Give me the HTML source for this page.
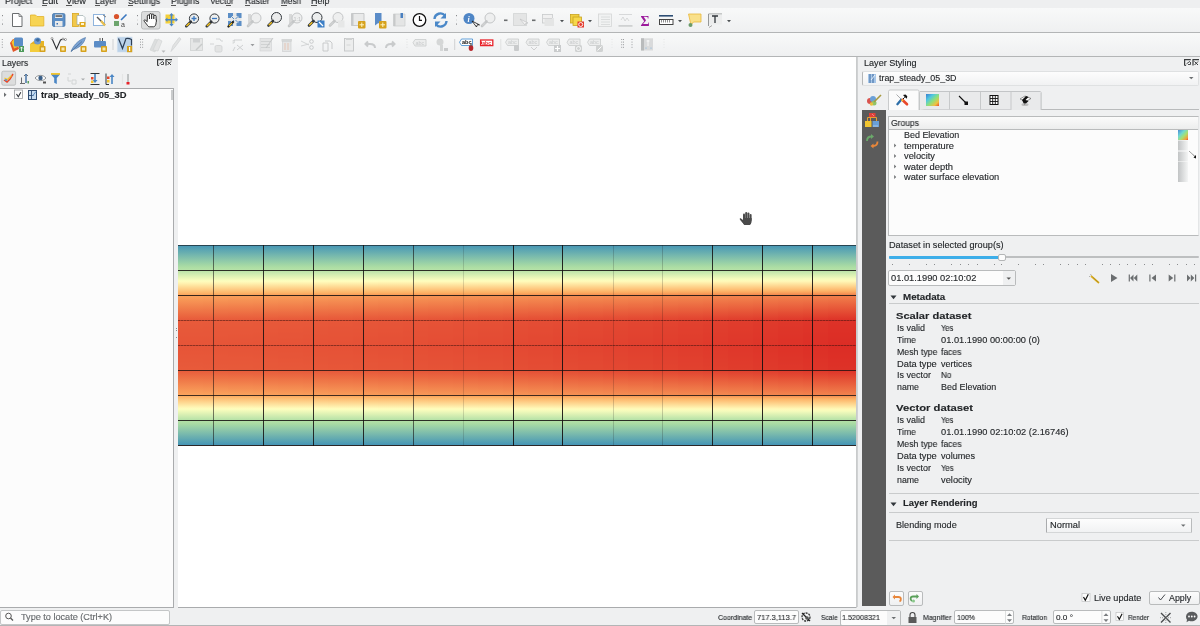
<!DOCTYPE html><html><head><meta charset="utf-8"><style>
html,body{margin:0;padding:0;}
body{width:1200px;height:626px;overflow:hidden;position:relative;background:#eff0f1;font-family:"Liberation Sans", sans-serif;}
.t{position:absolute;white-space:nowrap;font-family:"Liberation Sans", sans-serif;will-change:transform;-webkit-text-stroke:0.12px #232629;}
svg{overflow:visible}
</style></head><body>
<div style="position:absolute;left:0px;top:0px;width:1200px;height:8px;background:#eeeff0"></div>
<div class="t" style="left:5.3px;top:-3.12px;font-size:9px;line-height:9px;font-weight:400;color:#232629;transform:scaleX(0.9780);transform-origin:0 0;">Project</div>
<div class="t" style="left:42px;top:-3.12px;font-size:9px;line-height:9px;font-weight:400;color:#232629;transform:scaleX(1.0312);transform-origin:0 0;">Edit</div>
<div class="t" style="left:66px;top:-3.12px;font-size:9px;line-height:9px;font-weight:400;color:#232629;transform:scaleX(1.0331);transform-origin:0 0;">View</div>
<div class="t" style="left:95px;top:-3.12px;font-size:9px;line-height:9px;font-weight:400;color:#232629;transform:scaleX(0.9771);transform-origin:0 0;">Layer</div>
<div class="t" style="left:128.3px;top:-3.12px;font-size:9px;line-height:9px;font-weight:400;color:#232629;transform:scaleX(0.9867);transform-origin:0 0;">Settings</div>
<div class="t" style="left:170.5px;top:-3.12px;font-size:9px;line-height:9px;font-weight:400;color:#232629;transform:scaleX(0.9617);transform-origin:0 0;">Plugins</div>
<div class="t" style="left:210px;top:-3.12px;font-size:9px;line-height:9px;font-weight:400;color:#232629;transform:scaleX(0.9328);transform-origin:0 0;">Vector</div>
<div class="t" style="left:244.8px;top:-3.12px;font-size:9px;line-height:9px;font-weight:400;color:#232629;transform:scaleX(0.9315);transform-origin:0 0;">Raster</div>
<div class="t" style="left:280.6px;top:-3.12px;font-size:9px;line-height:9px;font-weight:400;color:#232629;transform:scaleX(0.9130);transform-origin:0 0;">Mesh</div>
<div class="t" style="left:310.8px;top:-3.12px;font-size:9px;line-height:9px;font-weight:400;color:#232629;transform:scaleX(0.9938);transform-origin:0 0;">Help</div>
<div style="position:absolute;left:42px;top:5px;width:5px;height:1px;background:#555"></div>
<div style="position:absolute;left:66px;top:5px;width:6px;height:1px;background:#555"></div>
<div style="position:absolute;left:95px;top:5px;width:5px;height:1px;background:#555"></div>
<div style="position:absolute;left:128.3px;top:5px;width:5px;height:1px;background:#555"></div>
<div style="position:absolute;left:170.5px;top:5px;width:5px;height:1px;background:#555"></div>
<div style="position:absolute;left:225.5px;top:5px;width:5px;height:1px;background:#555"></div>
<div style="position:absolute;left:244.8px;top:5px;width:5px;height:1px;background:#555"></div>
<div style="position:absolute;left:280.6px;top:5px;width:6px;height:1px;background:#555"></div>
<div style="position:absolute;left:310.8px;top:5px;width:6px;height:1px;background:#555"></div>
<div style="position:absolute;left:0px;top:8px;width:1200px;height:24px;background:linear-gradient(#f8f9f9,#eff0f1)"></div>
<div style="position:absolute;left:0px;top:32px;width:1200px;height:1px;background:#b3b5b6"></div>
<div style="position:absolute;left:0px;top:33px;width:1200px;height:23px;background:linear-gradient(#f8f9f9,#eff0f1)"></div>
<div style="position:absolute;left:0px;top:56px;width:1200px;height:1px;background:#b3b5b6"></div>
<svg style="position:absolute;left:0;top:0" width="860" height="60" viewBox="0 0 860 60"><rect x="2" y="15" width="1" height="1.2" fill="#8a8c8e"/><rect x="2" y="19.5" width="1" height="1" fill="#d0d2d3"/><rect x="2" y="23.5" width="1" height="1.2" fill="#8a8c8e"/><path d="M12.5 13.5 h6.5 l3 3 v10 h-9.5z" fill="#fff" stroke="#6b6e70" stroke-width="1"/><path d="M19 13.5 v3 h3" fill="none" stroke="#6b6e70" stroke-width="0.8"/><path d="M30.5 15 h5 l1.5 1.5 h6.8 v9.5 h-13.3z" fill="#f7d454" stroke="#e2b22a" stroke-width="0.8"/><rect x="52.5" y="13.5" width="12.5" height="13" rx="1.5" fill="#5b8ec6" stroke="#4a78aa" stroke-width="0.8"/><rect x="55" y="14.5" width="7.5" height="3.5" fill="#e8e8e8"/><rect x="55.5" y="15.3" width="6.5" height="1.5" fill="#555"/><rect x="55" y="21" width="7.5" height="5.5" fill="#e9eaea"/><rect x="56.5" y="23" width="1.5" height="1.5" fill="#3a6fb0"/><rect x="72.5" y="13.5" width="6" height="13" fill="#f2c84a" stroke="#d6a520" stroke-width="0.8"/><path d="M77 15.5 h6 l2 2 v7 h-8z" fill="#fff" stroke="#9aa" stroke-width="0.7"/><rect x="79.5" y="22" width="6" height="5" fill="#e0aa20"/><rect x="81" y="23" width="3" height="2" fill="#fff5d0"/><rect x="93.5" y="14.5" width="11" height="11" fill="#fff" stroke="#8fb4dd" stroke-width="1"/><path d="M97 17 l8 8" stroke="#555" stroke-width="1.4"/><path d="M101 21 l4 4.5" stroke="#e8c050" stroke-width="2.2"/><path d="M103 15 l3 2" stroke="#666" stroke-width="0.8"/><circle cx="116.5" cy="16.5" r="2.6" fill="#d9532c"/><path d="M121 20 l5.5 -5.5" stroke="#3b78c0" stroke-width="1.6"/><rect x="114" y="21" width="5" height="5" fill="#6da56d"/><text x="121" y="27" font-size="7" fill="#444" font-family="Liberation Sans">a</text><rect x="137" y="15" width="1" height="1.2" fill="#8a8c8e"/><rect x="137" y="19.5" width="1" height="1" fill="#d0d2d3"/><rect x="137" y="23.5" width="1" height="1.2" fill="#8a8c8e"/><rect x="141.5" y="11.5" width="18.5" height="17.5" rx="2" fill="#dcdddd" stroke="#b8babb" stroke-width="1"/><g fill="#fff" stroke="#111" stroke-width="0.85"><rect x="147.3" y="15" width="2.2" height="7" rx="1.1"/><rect x="149.5" y="13.6" width="2.2" height="8" rx="1.1"/><rect x="151.7" y="14" width="2.2" height="8" rx="1.1"/><rect x="153.9" y="15.3" width="2.2" height="7" rx="1.1"/></g><path d="M147.3 19.5 h8.8 v3 c0 2.2 -1.1 4.3 -2.6 4.3 h-4.2 c-1 0 -1.6 -1 -2.3 -2 l-2.8 -3.6 c-0.6 -0.8 0.3 -1.7 1.1 -1.1 l2 1.6z" fill="#fff" stroke="#111" stroke-width="0.85"/><rect x="147.8" y="19" width="7.8" height="3" fill="#fff"/><rect x="165.5" y="14.5" width="9" height="9" fill="#f5d038"/><path d="M171.5 13 l2.2 2.4 h-4.4z M171.5 26.5 l2.2-2.4 h-4.4z M165 19.8 l2.4-2.2 v4.4z M178 19.8 l-2.4-2.2 v4.4z" fill="#4a86c5"/><path d="M171.5 15 v10 M167 19.8 h9" stroke="#4a86c5" stroke-width="1.6"/><circle cx="194" cy="18.5" r="4.6" fill="#eceeee" stroke="#31363b" stroke-width="1"/><line x1="190.78" y1="21.72" x2="186.28" y2="26.22" stroke="#31363b" stroke-width="2.6" stroke-linecap="round"/><line x1="189.58" y1="22.919999999999998" x2="186.48" y2="26.02" stroke="#f0c020" stroke-width="1.5"/><path d="M191.5 18.5 h5 M194 16 v5" stroke="#3a78c0" stroke-width="1.3"/><circle cx="214.5" cy="18.5" r="4.6" fill="#eceeee" stroke="#31363b" stroke-width="1"/><line x1="211.28" y1="21.72" x2="206.78" y2="26.22" stroke="#31363b" stroke-width="2.6" stroke-linecap="round"/><line x1="210.08" y1="22.919999999999998" x2="206.98" y2="26.02" stroke="#f0c020" stroke-width="1.5"/><path d="M212 18.5 h5" stroke="#3a78c0" stroke-width="1.3"/><rect x="228" y="13" width="13.5" height="13" fill="#e6e8e8"/><path d="M228 13 h5 v3 h-2 v2 h-3z M241.5 13 h-5 v3 h2 v2 h3z M241.5 26 h-5 v-3 h2 v-2 h3z M228 26 h5 v-3 h-2 v-2 h-3z" fill="#5b8ec6"/><path d="M231 16 l3 3 M238.5 16 l-3 3 M238.5 23 l-3 -3 M231 23 l3 -3" stroke="#5b8ec6" stroke-width="1"/><line x1="233" y1="22" x2="228.5" y2="26.5" stroke="#222" stroke-width="2.4" stroke-linecap="round"/><line x1="232" y1="23" x2="229" y2="26" stroke="#f0c020" stroke-width="1.3"/><rect x="248" y="14" width="3" height="10" fill="#d8d9d9"/><circle cx="256" cy="18" r="5" fill="#eeefef" stroke="#c4c6c7" stroke-width="1"/><line x1="252.5" y1="21.5" x2="248.0" y2="26.0" stroke="#c4c6c7" stroke-width="2.6" stroke-linecap="round"/><line x1="251.3" y1="22.7" x2="248.2" y2="25.8" stroke="#d0d2d2" stroke-width="1.5"/><circle cx="276.5" cy="17.5" r="5" fill="#ebecec" stroke="#31363b" stroke-width="1"/><line x1="273.0" y1="21.0" x2="268.5" y2="25.5" stroke="#31363b" stroke-width="2.6" stroke-linecap="round"/><line x1="271.8" y1="22.2" x2="268.7" y2="25.3" stroke="#f0c020" stroke-width="1.5"/><rect x="289" y="14" width="3" height="10" fill="#d8d9d9"/><circle cx="297" cy="18" r="5" fill="#eeefef" stroke="#c4c6c7" stroke-width="1"/><line x1="293.5" y1="21.5" x2="289.0" y2="26.0" stroke="#c4c6c7" stroke-width="2.6" stroke-linecap="round"/><line x1="292.3" y1="22.7" x2="289.2" y2="25.8" stroke="#d0d2d2" stroke-width="1.5"/><text x="293.5" y="20.5" font-size="5.5" fill="#bfc1c2" font-family="Liberation Sans">1:1</text><circle cx="317" cy="17.5" r="5" fill="#eceeee" stroke="#31363b" stroke-width="1"/><line x1="313.5" y1="21.0" x2="309.0" y2="25.5" stroke="#31363b" stroke-width="2.6" stroke-linecap="round"/><line x1="312.3" y1="22.2" x2="309.2" y2="25.3" stroke="#f0c020" stroke-width="1.5"/><rect x="317.5" y="20.5" width="7" height="7" fill="#3d7fc6"/><path d="M319 22 l4 4" stroke="#fff" stroke-width="1.2"/><circle cx="338" cy="17.5" r="5" fill="#eeefef" stroke="#c4c6c7" stroke-width="1"/><line x1="334.5" y1="21.0" x2="330.0" y2="25.5" stroke="#c4c6c7" stroke-width="2.6" stroke-linecap="round"/><line x1="333.3" y1="22.2" x2="330.2" y2="25.3" stroke="#d0d2d2" stroke-width="1.5"/><rect x="338" y="20.5" width="6.5" height="7" fill="#e6e7e7"/><path d="M351.5 13.5 h12.5 v12 h-12.5z" fill="#e9eaea" stroke="#bdbfc0" stroke-width="0.8"/><rect x="351.5" y="13.5" width="2" height="12" fill="#c7c9ca"/><rect x="358" y="21" width="7.5" height="7.5" rx="1" fill="#d6a21e"/><path d="M361.8 22.5 v4.5 M359.5 24.8 h4.5" stroke="#fff6c0" stroke-width="1"/><path d="M375 13 h6.5 v12.5 l-3.2 -2.5 l-3.3 2.5z" fill="#5a8cc8"/><rect x="379" y="21" width="7.5" height="7.5" rx="1" fill="#d6a21e"/><path d="M382.8 22.5 v4.5 M380.5 24.8 h4.5" stroke="#fff6c0" stroke-width="1"/><path d="M393.5 14 h11.5 v12 h-11.5z" fill="#e4e5e5" stroke="#c9cbcc" stroke-width="0.7"/><rect x="393.5" y="14" width="2" height="12" fill="#c7c9ca"/><rect x="400.5" y="13" width="2.5" height="5" fill="#4a80c0"/><circle cx="419.5" cy="20" r="6.3" fill="#fff" stroke="#111" stroke-width="1.3"/><path d="M419.5 16 v4.3 h2.5" fill="none" stroke="#111" stroke-width="1.2"/><path d="M434.5 19 a6 6 0 0 1 10.5 -3.5" fill="none" stroke="#4a88c8" stroke-width="2.4"/><path d="M446 13 v5.5 h-5.5z" fill="#4a88c8"/><path d="M446.5 21 a6 6 0 0 1 -10.5 3.5" fill="none" stroke="#4a88c8" stroke-width="2.4"/><path d="M435 27 v-5.5 h5.5z" fill="#4a88c8"/><rect x="456" y="15" width="1" height="1.2" fill="#8a8c8e"/><rect x="456" y="19.5" width="1" height="1" fill="#d0d2d3"/><rect x="456" y="23.5" width="1" height="1.2" fill="#8a8c8e"/><circle cx="469" cy="18.5" r="5.5" fill="#4f86c6"/><text x="467.6" y="22" font-size="8" font-weight="bold" font-style="italic" fill="#fff" font-family="Liberation Serif">i</text><path d="M472 21 l4.5 6 l0.8 -2.3 l2.2 0.2z" fill="#fff" stroke="#111" stroke-width="0.8"/><circle cx="490" cy="18" r="5" fill="#eeefef" stroke="#c4c6c7" stroke-width="1"/><line x1="486.5" y1="21.5" x2="482.0" y2="26.0" stroke="#c4c6c7" stroke-width="2.6" stroke-linecap="round"/><line x1="485.3" y1="22.7" x2="482.2" y2="25.8" stroke="#d0d2d2" stroke-width="1.5"/><rect x="504" y="19.5" width="3.5" height="1.6" fill="#6b6e70"/><rect x="513.5" y="13.5" width="13" height="12" fill="#e4e5e5" stroke="#b8babb" stroke-width="0.8" stroke-dasharray="1 1"/><path d="M520 19 l5 6 l1 -2 l2 0z" fill="#f4f4f4" stroke="#c0c2c3" stroke-width="0.7"/><rect x="532" y="19.5" width="3.5" height="1.6" fill="#6b6e70"/><rect x="542.5" y="14.5" width="10" height="8.5" fill="#f0f0f0" stroke="#c8cacb" stroke-width="0.8"/><rect x="544.5" y="18" width="9.5" height="8" fill="#e4e5e5"/><line x1="543" y1="18.5" x2="552" y2="18.5" stroke="#cfd1d2" stroke-width="0.8"/><path d="M560 20 h4 l-2 2.2z" fill="#4d5154"/><rect x="570.5" y="14.5" width="8.5" height="8.5" fill="#f1d040" stroke="#c9a320" stroke-width="0.8"/><rect x="573" y="17" width="8.5" height="8.5" fill="#f6d84a" stroke="#c9a320" stroke-width="0.8"/><rect x="577.5" y="21.5" width="6.5" height="6" fill="#e33b2f"/><circle cx="580.7" cy="24.5" r="2" fill="none" stroke="#fff" stroke-width="0.9"/><path d="M588 20 h4 l-2 2.2z" fill="#4d5154"/><rect x="598.5" y="14" width="13" height="12.5" fill="#f1f2f2" stroke="#d4d6d6" stroke-width="0.8"/><path d="M601 17 h9 M601 19.5 h9 M601 22 h9 M601 24.5 h9" stroke="#d8dada" stroke-width="0.9"/><path d="M619 14.5 h13 M621 20 l2 -3 l2 4 l2 -3 l2 3" stroke="#cfd1d2" stroke-width="0.8" fill="none"/><rect x="618.5" y="25" width="14" height="1.8" fill="#cfd1d2"/><text x="640.5" y="26" font-size="14" font-weight="bold" fill="#9c1a9c" font-family="Liberation Serif">Σ</text><rect x="659" y="15" width="14" height="1.6" fill="#2d4e74"/><rect x="659.5" y="19.5" width="13.5" height="5" fill="#fff" stroke="#444" stroke-width="1"/><path d="M661.5 20 v2.5 M663.5 20 v2.5 M665.5 20 v2.5 M667.5 20 v2.5 M669.5 20 v2.5" stroke="#444" stroke-width="0.6"/><path d="M678 20 h4 l-2 2.2z" fill="#4d5154"/><path d="M688.5 14 h12.5 v8 h-7.5 l-2.5 3 z" fill="#f9e08a" stroke="#e8b83a" stroke-width="0.8"/><circle cx="690.5" cy="25" r="2" fill="#6a9a6a"/><path d="M708.5 26 v-12 h13.5" fill="none" stroke="#8a8c8d" stroke-width="0.9"/><rect x="709" y="14.5" width="13" height="10" fill="#eceded"/><path d="M712 16 h6 M715 16 v7" stroke="#31363b" stroke-width="1.3"/><path d="M709 27.5 l3-2" stroke="#888" stroke-width="0.7"/><path d="M727 20 h4 l-2 2.2z" fill="#4d5154"/><rect x="1.7999999999999998" y="39" width="1" height="1" fill="#9a9c9e"/><rect x="1.7999999999999998" y="41.6" width="1" height="1" fill="#9a9c9e"/><rect x="1.7999999999999998" y="44.2" width="1" height="1" fill="#9a9c9e"/><rect x="1.7999999999999998" y="46.800000000000004" width="1" height="1" fill="#9a9c9e"/><path d="M10 43 l3 -4 l4 1 l2 9 l-6 3z" fill="#e0572a"/><path d="M11.5 42 l3 -3.5 l3 1 l1.5 7 l-5 2z" fill="#f2c530"/><rect x="14" y="37.5" width="9" height="9" rx="1.5" fill="#5a8cc6"/><rect x="19" y="46" width="5" height="6" fill="#4d9a5a"/><path d="M21.5 47 v4 M20 48.5 l1.5 -1.5 l1.5 1.5" stroke="#fff" stroke-width="0.8" fill="none"/><path d="M30 44 l4 -3 h10 v8 l-4 3 h-10z" fill="#e6b425"/><path d="M30 44 h10 v8 h-10z" fill="#f3cc3c"/><circle cx="37.5" cy="41" r="3.5" fill="#6d9ad0"/><path d="M35 40 l3 -2 l2 2 l-2 2z" fill="#3e6c9e"/><rect x="39.5" y="46" width="6" height="6" rx="0.8" fill="#d6a21e"/><rect x="41.0" y="47.5" width="3" height="3" fill="#fff3c4" opacity="0.85"/><path d="M52 38.5 l4.5 10.5 l4 -9 l2.5 -1 l2.5 1" fill="none" stroke="#2c2f33" stroke-width="1.1"/><circle cx="52" cy="38.5" r="1" fill="#fff" stroke="#555" stroke-width="0.5"/><circle cx="63" cy="39" r="1" fill="#fff" stroke="#555" stroke-width="0.5"/><circle cx="65.5" cy="39.5" r="1" fill="#fff" stroke="#555" stroke-width="0.5"/><rect x="60" y="46" width="6" height="6" rx="0.8" fill="#d6a21e"/><rect x="61.5" y="47.5" width="3" height="3" fill="#fff3c4" opacity="0.85"/><path d="M71 51.5 c2 -5 6 -11 14.5 -14 c-1 5 -5 10 -12 12z" fill="#7aa2d2" stroke="#4a74a6" stroke-width="0.6"/><path d="M71 51.5 l11 -10" stroke="#3a5e88" stroke-width="0.6"/><rect x="80.5" y="46" width="6" height="6" rx="0.8" fill="#d6a21e"/><rect x="82.0" y="47.5" width="3" height="3" fill="#fff3c4" opacity="0.85"/><rect x="94" y="41" width="12" height="6.5" rx="1" fill="#5a8cc6"/><rect x="99.5" y="38" width="1" height="3" fill="#555"/><rect x="102" y="38" width="1" height="3" fill="#555"/><rect x="101" y="46" width="6" height="6" rx="0.8" fill="#d6a21e"/><rect x="102.5" y="47.5" width="3" height="3" fill="#fff3c4" opacity="0.85"/><rect x="112.5" y="39" width="1" height="11" fill="#d0d2d3"/><rect x="117.2" y="37" width="14.9" height="15.1" rx="0.5" fill="#bcd3ea"/><rect x="117.2" y="37" width="14.9" height="15.1" fill="none" stroke="#d8e4ef" stroke-width="0.6"/><path d="M118.5 38.5 l4 10 l3.5 -10 q3 -0.5 5.5 1 v6" fill="none" stroke="#2c3e55" stroke-width="1.2"/><rect x="127" y="46" width="5.2" height="6.2" fill="#d6a21e"/><path d="M129.6 47 v4" stroke="#fff" stroke-width="1.2"/><rect x="140.0" y="39" width="1" height="1" fill="#9a9c9e"/><rect x="140.0" y="41.6" width="1" height="1" fill="#9a9c9e"/><rect x="140.0" y="44.2" width="1" height="1" fill="#9a9c9e"/><rect x="140.0" y="46.800000000000004" width="1" height="1" fill="#9a9c9e"/><rect x="142.1" y="39" width="1" height="1" fill="#9a9c9e"/><rect x="142.1" y="41.6" width="1" height="1" fill="#9a9c9e"/><rect x="142.1" y="44.2" width="1" height="1" fill="#9a9c9e"/><rect x="142.1" y="46.800000000000004" width="1" height="1" fill="#9a9c9e"/><path d="M150 50 l5 -11 l5 2 l-5 11z" fill="#dcdede" stroke="#cfd1d2" stroke-width="0.6"/><path d="M153 50 l5 -11 l4 2 l-4 10z" fill="#e4e5e5" stroke="#cfd1d2" stroke-width="0.6"/><path d="M161.5 50.5 h4 l-2 2.2z" fill="#b8babb"/><path d="M171 51.5 l2 -6 l6 -8 l2 1.5 l-6 8z" fill="#e2e3e3" stroke="#cfd1d2" stroke-width="0.7"/><rect x="190.5" y="38.5" width="12" height="12" fill="#e5e6e6" stroke="#cfd1d2" stroke-width="0.8"/><rect x="193" y="39" width="7" height="3.5" fill="#cfd1d2"/><path d="M196 50 l6 -6" stroke="#c8caca" stroke-width="1.4"/><path d="M210 44 h4 M216 39 h4 l1 2 h2" stroke="#cfd1d2" stroke-width="0.9" fill="none"/><rect x="215" y="45.5" width="7" height="6.5" rx="1.5" fill="#e3e4e4" stroke="#cfd1d2" stroke-width="0.8"/><path d="M233 51 l2 -4 M237 45 l6 5 M243 45 l-6 5 M234 40 h8" stroke="#cfd1d2" stroke-width="1" fill="none"/><text x="232.5" y="43" font-size="5" fill="#c4c6c7" font-family="Liberation Sans">p</text><path d="M250.5 44 h4 l-2 2.2z" fill="#9a9c9e"/><rect x="260" y="38.5" width="11.5" height="12.5" fill="#e4e5e5" stroke="#cfd1d2" stroke-width="0.6"/><path d="M261 41.5 h9 M261 44.5 h9 M261 47.5 h9" stroke="#d0d2d2" stroke-width="1"/><path d="M266 48 l7 -10" stroke="#c4c6c7" stroke-width="1"/><rect x="281.5" y="39" width="10.5" height="2.5" fill="#d5d7d7"/><rect x="282.5" y="41.5" width="8.5" height="10" fill="#e4e5e5" stroke="#cfd1d2" stroke-width="0.7"/><path d="M285 43 v7 M288 43 v7" stroke="#e8b8a0" stroke-width="0.7"/><path d="M301 41 l8 4 M301 46 l8 -2" stroke="#cfd1d2" stroke-width="0.9"/><circle cx="311.5" cy="41.5" r="1.8" fill="none" stroke="#c4c6c7" stroke-width="0.9"/><circle cx="311.5" cy="47.5" r="1.8" fill="none" stroke="#c4c6c7" stroke-width="0.9"/><path d="M323 43 h5 v8 h-5z M325 41 h5 l2 2 v6" fill="none" stroke="#c4c6c7" stroke-width="0.9"/><rect x="344.5" y="38.5" width="9" height="12.5" fill="#eceded" stroke="#c4c6c7" stroke-width="0.9"/><rect x="346" y="38" width="6" height="2" fill="#d0d2d2"/><path d="M346.5 45 h4" stroke="#d0d2d2" stroke-width="0.8"/><path d="M375 48 c0 -3 -2 -4 -5 -4 h-4 M368 41.5 l-2.5 2.5 l2.5 2.5" fill="none" stroke="#c9cbcc" stroke-width="2"/><path d="M386 48 c0 -3 2 -4 5 -4 h3 M392 41.5 l2.5 2.5 l-2.5 2.5" fill="none" stroke="#c9cbcc" stroke-width="2"/><rect x="406.5" y="39" width="1" height="1" fill="#dfe0e0"/><rect x="406.5" y="41.6" width="1" height="1" fill="#dfe0e0"/><rect x="406.5" y="44.2" width="1" height="1" fill="#dfe0e0"/><rect x="406.5" y="46.800000000000004" width="1" height="1" fill="#dfe0e0"/><path d="M415 39.5 h11 v6.5 h-11 l-2 -3.25z" fill="#eceded" stroke="#c9cbcc" stroke-width="0.8"/><text x="415.5" y="44.8" font-size="5.5" fill="#c9cbcc" font-family="Liberation Sans">abc</text><circle cx="440" cy="42" r="3.5" fill="#d5d7d7"/><rect x="440" y="45" width="3" height="6" fill="#d5d7d7"/><rect x="444" y="48" width="4" height="3" fill="#c9cbcc"/><rect x="454.2" y="39" width="1" height="11" fill="#d0d2d3"/><path d="M461.5 39 h11 v6.5 h-11 l-2 -3.25z" fill="#fff" stroke="#3c8ad0" stroke-width="0.8"/><text x="462.0" y="44.3" font-size="5.5" fill="#111" font-weight="bold" font-family="Liberation Sans">abc</text><ellipse cx="471" cy="48" rx="2.3" ry="3" fill="#b8272d"/><rect x="470.3" y="43" width="1.4" height="3" fill="#666"/><rect x="480.6" y="40" width="12.2" height="5.6" fill="#fff" stroke="#e8232a" stroke-width="1.3"/><text x="482.3" y="44.6" font-size="5" font-weight="bold" fill="#e8232a" font-family="Liberation Sans">abc</text><rect x="480" y="41.5" width="2" height="2.6" fill="#e8232a"/><rect x="500.3" y="39" width="1" height="11" fill="#e0e1e2"/><path d="M507.5 39 h11 v6.5 h-11 l-2 -3.25z" fill="#eceded" stroke="#c9cbcc" stroke-width="0.8"/><text x="508.0" y="44.3" font-size="5.5" fill="#c9cbcc" font-family="Liberation Sans">abc</text><rect x="514" y="45" width="5" height="6" rx="1" fill="#c9cbcc"/><path d="M528 39 h11 v6.5 h-11 l-2 -3.25z" fill="#eceded" stroke="#c9cbcc" stroke-width="0.8"/><text x="528.5" y="44.3" font-size="5.5" fill="#c9cbcc" font-family="Liberation Sans">abc</text><path d="M531 47 l3 3 l3 -3" fill="none" stroke="#c9cbcc" stroke-width="0.9"/><path d="M548.5 39 h11 v6.5 h-11 l-2 -3.25z" fill="#eceded" stroke="#c9cbcc" stroke-width="0.8"/><text x="549.0" y="44.3" font-size="5.5" fill="#c9cbcc" font-family="Liberation Sans">abc</text><rect x="554" y="45" width="7" height="7" fill="#c9cbcc"/><path d="M557.5 46 v5 M555 48.5 h5" stroke="#fff" stroke-width="1.2"/><path d="M569 39 h11 v6.5 h-11 l-2 -3.25z" fill="#eceded" stroke="#c9cbcc" stroke-width="0.8"/><text x="569.5" y="44.3" font-size="5.5" fill="#c9cbcc" font-family="Liberation Sans">abc</text><rect x="575" y="45" width="7" height="7" rx="1.5" fill="#d0d2d2"/><circle cx="578.5" cy="48.5" r="2" fill="none" stroke="#fff" stroke-width="0.8"/><path d="M589.5 39 h11 v6.5 h-11 l-2 -3.25z" fill="#eceded" stroke="#c9cbcc" stroke-width="0.8"/><text x="590.0" y="44.3" font-size="5.5" fill="#c9cbcc" font-family="Liberation Sans">abc</text><rect x="596" y="45" width="7" height="7" rx="1.5" fill="#d0d2d2"/><path d="M597.5 50.5 l4 -4" stroke="#fff" stroke-width="0.9"/><rect x="611.5" y="39" width="1" height="1" fill="#e4e5e5"/><rect x="611.5" y="41.6" width="1" height="1" fill="#e4e5e5"/><rect x="611.5" y="44.2" width="1" height="1" fill="#e4e5e5"/><rect x="611.5" y="46.800000000000004" width="1" height="1" fill="#e4e5e5"/><rect x="621.2" y="39" width="1" height="1" fill="#9a9c9e"/><rect x="621.2" y="41.6" width="1" height="1" fill="#9a9c9e"/><rect x="621.2" y="44.2" width="1" height="1" fill="#9a9c9e"/><rect x="621.2" y="46.800000000000004" width="1" height="1" fill="#9a9c9e"/><rect x="623.0" y="39" width="1" height="1" fill="#9a9c9e"/><rect x="623.0" y="41.6" width="1" height="1" fill="#9a9c9e"/><rect x="623.0" y="44.2" width="1" height="1" fill="#9a9c9e"/><rect x="623.0" y="46.800000000000004" width="1" height="1" fill="#9a9c9e"/><rect x="631.5" y="39" width="1" height="1" fill="#9a9c9e"/><rect x="631.5" y="41.6" width="1" height="1" fill="#9a9c9e"/><rect x="631.5" y="44.2" width="1" height="1" fill="#9a9c9e"/><rect x="631.5" y="46.800000000000004" width="1" height="1" fill="#9a9c9e"/><rect x="641" y="38.3" width="12" height="12.2" fill="#d9dadb"/><rect x="641" y="38.3" width="3" height="12.2" fill="#b9bbbc"/><path d="M648 40 v6 M646.5 41 h3" stroke="#fff" stroke-width="0.8"/><circle cx="646" cy="48" r="0.6" fill="#7ab0e0"/><circle cx="651" cy="48" r="0.6" fill="#7ab0e0"/><rect x="663.5" y="39" width="1" height="1" fill="#e4e5e5"/><rect x="663.5" y="41.6" width="1" height="1" fill="#e4e5e5"/><rect x="663.5" y="44.2" width="1" height="1" fill="#e4e5e5"/><rect x="663.5" y="46.800000000000004" width="1" height="1" fill="#e4e5e5"/></svg>
<div style="position:absolute;left:0px;top:57px;width:178px;height:550px;background:#eff0f1"></div>
<div class="t" style="left:1.8px;top:59.05px;font-size:8.8px;line-height:8.8px;font-weight:400;color:#232629;transform:scaleX(0.9922);transform-origin:0 0;">Layers</div>
<div style="position:absolute;left:0px;top:88px;width:174px;height:520px;background:#fcfcfc;box-sizing:border-box;border:1px solid #a9abad;border-left:none"></div>
<div class="t" style="left:41.2px;top:90.71px;font-size:9.2px;line-height:9.2px;font-weight:700;color:#232629;transform:scaleX(1.0207);transform-origin:0 0;">trap_steady_05_3D</div>
<svg style="position:absolute;left:0;top:0" width="180" height="110" viewBox="0 0 180 110"><path d="M157.6 65.4 v-5.8 h6.2" fill="none" stroke="#3a3c3e" stroke-width="1.2"/><path d="M157.6 65.4 h1.5" stroke="#3a3c3e" stroke-width="1"/><path d="M159.5 63.8 l3.5 -2.5 M161 64.5 h2.5 v-2.5" fill="none" stroke="#3a3c3e" stroke-width="0.9"/><path d="M166 65.4 v-5.8 h6" fill="none" stroke="#3a3c3e" stroke-width="1.2"/><path d="M167.5 61.5 l3.5 3.5 M171 61.5 l-3.5 3.5" stroke="#3a3c3e" stroke-width="1"/><rect x="1.8" y="71.2" width="13.8" height="14" rx="1.5" fill="#dcdddd" stroke="#b5b7b8" stroke-width="0.8"/><path d="M4 80 l3 2 l3 -3 l3 -5" stroke="#e8472a" stroke-width="1.5" fill="none"/><path d="M4.5 78 l3 1.5 l4 -4" stroke="#f2c530" stroke-width="1.2" fill="none"/><circle cx="6" cy="80" r="1" fill="#4a88c8"/><path d="M20 83.5 h5 M21.5 83.5 v-6 M24 76 l2 -2 l2 2 M26 74 v9" stroke="#6b6e70" stroke-width="1" fill="none"/><path d="M26 74 v9" stroke="#4a80c0" stroke-width="1.2"/><rect x="27.5" y="81" width="1.5" height="2.5" fill="#5aa05a"/><path d="M35 78 c3 -3.5 8 -3.5 11 0 c-3 3.5 -8 3.5 -11 0z" fill="#fff" stroke="#7a7d80" stroke-width="0.8"/><circle cx="40.5" cy="78" r="2.2" fill="#3a5f88"/><rect x="43" y="81.5" width="3" height="2" fill="#555"/><path d="M51 73 h9 v1.5 l-3.2 3.5 v6 l-2.6 -1.2 v-4.8 l-3.2 -3.5z" fill="#4a86c5"/><rect x="51" y="73" width="9" height="1.8" fill="#f2c530"/><path d="M68 74 h3 M68 77 v4 h3 M72 80 h4 v4 h-4z" stroke="#cfd1d2" stroke-width="0.9" fill="none"/><path d="M81 78.5 h4 l-2 2z" fill="#a9abad"/><path d="M90.5 73.5 h9 M90.5 84.5 h9" stroke="#31363b" stroke-width="1"/><path d="M95 74 v8" stroke="#4a86c5" stroke-width="1.6"/><path d="M92.5 80 l2.5 3 l2.5 -3z" fill="#4a86c5"/><rect x="91" y="77" width="2.5" height="2.5" fill="#e8472a"/><rect x="91" y="80.5" width="2.5" height="2.5" fill="#f2c530"/><path d="M106 73.5 v11 h3" stroke="#31363b" stroke-width="1" fill="none"/><path d="M112 84 v-8" stroke="#4a86c5" stroke-width="1.6"/><path d="M109.5 77 l2.5 -3 l2.5 3z" fill="#4a86c5"/><rect x="107" y="76.5" width="2.5" height="2.5" fill="#e8472a"/><rect x="107" y="80" width="2.5" height="2.5" fill="#f2c530"/><path d="M122.5 74 v10" stroke="#e4e5e5" stroke-width="1.2"/><path d="M128 74 v8" stroke="#7a7d80" stroke-width="0.8"/><rect x="126.5" y="82" width="3" height="2.5" fill="#e8232a"/><path d="M4 92.5 l2.5 2.3 l-2.5 2.3z" fill="#6b6e70"/><rect x="14.5" y="90" width="8" height="8.5" fill="#fcfcfc" stroke="#9a9c9e" stroke-width="0.8"/><path d="M16.5 94 l1.8 2.7 l2.5 -4.5" fill="none" stroke="#31363b" stroke-width="1.1"/><rect x="28.5" y="90.5" width="8" height="9" fill="#c6dcf0" stroke="#2d4a70" stroke-width="1"/><path d="M28.5 95.5 h5 M31.5 90.5 v9" stroke="#2d4a70" stroke-width="0.9"/><path d="M32.5 96 l3.5 -4.5" stroke="#5a8ac0" stroke-width="1"/><rect x="171" y="90" width="2" height="10" fill="#c9cbcc"/></svg>
<div style="position:absolute;left:178px;top:57px;width:678px;height:551px;background:#ffffff"></div>
<div style="position:absolute;left:178px;top:607px;width:679px;height:1px;background:#a9abad"></div>
<div style="position:absolute;left:176px;top:328px;width:1px;height:1px;background:#8a8c8e"></div>
<div style="position:absolute;left:176px;top:330px;width:1px;height:1px;background:#8a8c8e"></div>
<div style="position:absolute;left:176px;top:337px;width:1px;height:1px;background:#8a8c8e"></div>
<div style="position:absolute;left:856px;top:57px;width:1px;height:551px;background:#c9cbcc"></div>
<div style="position:absolute;left:178px;top:245px;width:25px;height:200px;background:linear-gradient(#4595b6 0px,#4e9cb4 2px,#57a2b2 4px,#61a9b1 6px,#6aafaf 8px,#74b6ae 10px,#7dbdac 12px,#87c3aa 14px,#90caa9 16px,#99d1a7 18px,#a3d7a5 20px,#acdda4 22px,#b2e0a6 24px,#bce4a9 26px,#c9e9ae 28px,#d6eeb2 30px,#e3f4b6 32px,#f0f9ba 34px,#fdfebe 36px,#fff4b3 38px,#fee8a4 40px,#fedb95 42px,#fecf87 44px,#fdc278 46px,#fdb56a 48px,#fba45d 50px,#f99e5a 52px,#f89957 54px,#f69354 56px,#f58d52 58px,#f3874f 60px,#f1814c 62px,#f07b49 64px,#ee7547 66px,#ed6f44 68px,#eb6941 70px,#ea633e 72px,#e85d3c 74px,#e85a3a 76px,#e85a3a 78px,#e7593a 80px,#e7593a 82px,#e75839 84px,#e75839 86px,#e75739 88px,#e75739 90px,#e75638 92px,#e75638 94px,#e65538 96px,#e65538 98px,#e65438 100px,#e65538 102px,#e65538 104px,#e75638 106px,#e75638 108px,#e75739 110px,#e75739 112px,#e75839 114px,#e75839 116px,#e7593a 118px,#e7593a 120px,#e85a3a 122px,#e85a3a 124px,#e85d3c 126px,#ea633e 128px,#eb6941 130px,#ed6f44 132px,#ee7547 134px,#f07b49 136px,#f1814c 138px,#f3874f 140px,#f58d52 142px,#f69354 144px,#f89957 146px,#f99e5a 148px,#fba45d 150px,#fdb56a 152px,#fdc278 154px,#fecf87 156px,#fedb95 158px,#fee8a4 160px,#fff4b3 162px,#fdfebe 164px,#f0f9ba 166px,#e3f4b6 168px,#d6eeb2 170px,#c9e9ae 172px,#bce4a9 174px,#b2e0a6 176px,#acdda4 178px,#a3d7a5 180px,#99d1a7 182px,#90caa9 184px,#87c3aa 186px,#7dbdac 188px,#74b6ae 190px,#6aafaf 192px,#61a9b1 194px,#57a2b2 196px,#4e9cb4 198px,#4595b6 200px)"></div>
<div style="position:absolute;left:203px;top:245px;width:25px;height:200px;background:linear-gradient(#4595b6 0px,#4e9cb4 2px,#57a2b2 4px,#61a9b1 6px,#6aafaf 8px,#74b6ae 10px,#7dbdac 12px,#87c3aa 14px,#90caa9 16px,#99d1a7 18px,#a3d7a5 20px,#acdda4 22px,#b2e0a6 24px,#bce4a9 26px,#c9e9ae 28px,#d6eeb2 30px,#e3f4b6 32px,#f0f9ba 34px,#fdfebe 36px,#fff4b2 38px,#fee7a4 40px,#fedb95 42px,#fece86 44px,#fdc177 46px,#fdb569 48px,#faa35c 50px,#f99d59 52px,#f79757 54px,#f69254 56px,#f48c51 58px,#f3864e 60px,#f1804c 62px,#f07a49 64px,#ee7446 66px,#ed6f44 68px,#eb6941 70px,#ea633e 72px,#e85d3c 74px,#e85a3a 76px,#e7593a 78px,#e7593a 80px,#e75839 82px,#e75839 84px,#e75739 86px,#e75739 88px,#e75739 90px,#e75638 92px,#e65638 94px,#e65538 96px,#e65538 98px,#e65437 100px,#e65538 102px,#e65538 104px,#e65638 106px,#e75638 108px,#e75739 110px,#e75739 112px,#e75739 114px,#e75839 116px,#e75839 118px,#e7593a 120px,#e7593a 122px,#e85a3a 124px,#e85d3c 126px,#ea633e 128px,#eb6941 130px,#ed6f44 132px,#ee7446 134px,#f07a49 136px,#f1804c 138px,#f3864e 140px,#f48c51 142px,#f69254 144px,#f79757 146px,#f99d59 148px,#faa35c 150px,#fdb569 152px,#fdc177 154px,#fece86 156px,#fedb95 158px,#fee7a4 160px,#fff4b2 162px,#fdfebe 164px,#f0f9ba 166px,#e3f4b6 168px,#d6eeb2 170px,#c9e9ae 172px,#bce4a9 174px,#b2e0a6 176px,#acdda4 178px,#a3d7a5 180px,#99d1a7 182px,#90caa9 184px,#87c3aa 186px,#7dbdac 188px,#74b6ae 190px,#6aafaf 192px,#61a9b1 194px,#57a2b2 196px,#4e9cb4 198px,#4595b6 200px)"></div>
<div style="position:absolute;left:228px;top:245px;width:25px;height:200px;background:linear-gradient(#4595b6 0px,#4e9cb4 2px,#57a2b2 4px,#61a9b1 6px,#6aafaf 8px,#74b6ae 10px,#7dbdac 12px,#87c3aa 14px,#90caa9 16px,#99d1a7 18px,#a3d7a5 20px,#acdda4 22px,#b2e0a6 24px,#bce4a9 26px,#c9e9ae 28px,#d6eeb2 30px,#e3f4b6 32px,#f0f9ba 34px,#fefebf 36px,#fff4b2 38px,#fee7a3 40px,#feda94 42px,#fecd86 44px,#fdc177 46px,#fdb468 48px,#faa25b 50px,#f89c59 52px,#f79656 54px,#f59053 56px,#f48b51 58px,#f3854e 60px,#f17f4b 62px,#f07949 64px,#ee7446 66px,#ed6e43 68px,#eb6841 70px,#ea623e 72px,#e85d3b 74px,#e7593a 76px,#e7593a 78px,#e75939 80px,#e75839 82px,#e75839 84px,#e75739 86px,#e75739 88px,#e75638 90px,#e65638 92px,#e65538 94px,#e65538 96px,#e65437 98px,#e65437 100px,#e65437 102px,#e65538 104px,#e65538 106px,#e65638 108px,#e75638 110px,#e75739 112px,#e75739 114px,#e75839 116px,#e75839 118px,#e75939 120px,#e7593a 122px,#e7593a 124px,#e85d3b 126px,#ea623e 128px,#eb6841 130px,#ed6e43 132px,#ee7446 134px,#f07949 136px,#f17f4b 138px,#f3854e 140px,#f48b51 142px,#f59053 144px,#f79656 146px,#f89c59 148px,#faa25b 150px,#fdb468 152px,#fdc177 154px,#fecd86 156px,#feda94 158px,#fee7a3 160px,#fff4b2 162px,#fefebf 164px,#f0f9ba 166px,#e3f4b6 168px,#d6eeb2 170px,#c9e9ae 172px,#bce4a9 174px,#b2e0a6 176px,#acdda4 178px,#a3d7a5 180px,#99d1a7 182px,#90caa9 184px,#87c3aa 186px,#7dbdac 188px,#74b6ae 190px,#6aafaf 192px,#61a9b1 194px,#57a2b2 196px,#4e9cb4 198px,#4595b6 200px)"></div>
<div style="position:absolute;left:253px;top:245px;width:25px;height:200px;background:linear-gradient(#4595b6 0px,#4e9cb4 2px,#57a2b2 4px,#61a9b1 6px,#6aafaf 8px,#74b6ae 10px,#7dbdac 12px,#87c3aa 14px,#90caa9 16px,#99d1a7 18px,#a3d7a5 20px,#acdda4 22px,#b2e0a6 24px,#bce4a9 26px,#c9e9ae 28px,#d6eeb2 30px,#e3f4b6 32px,#f1f9ba 34px,#feffbf 36px,#fff3b1 38px,#fee6a3 40px,#feda94 42px,#fecd85 44px,#fdc076 46px,#fdb367 48px,#faa05b 50px,#f89b58 52px,#f79555 54px,#f58f53 56px,#f48a50 58px,#f2844e 60px,#f17e4b 62px,#ef7948 64px,#ee7346 66px,#ec6d43 68px,#eb6740 70px,#ea623e 72px,#e85c3b 74px,#e7593a 76px,#e75839 78px,#e75839 80px,#e75839 82px,#e75739 84px,#e75739 86px,#e75638 88px,#e65638 90px,#e65538 92px,#e65538 94px,#e65437 96px,#e65437 98px,#e65337 100px,#e65437 102px,#e65437 104px,#e65538 106px,#e65538 108px,#e65638 110px,#e75638 112px,#e75739 114px,#e75739 116px,#e75839 118px,#e75839 120px,#e75839 122px,#e7593a 124px,#e85c3b 126px,#ea623e 128px,#eb6740 130px,#ec6d43 132px,#ee7346 134px,#ef7948 136px,#f17e4b 138px,#f2844e 140px,#f48a50 142px,#f58f53 144px,#f79555 146px,#f89b58 148px,#faa05b 150px,#fdb367 152px,#fdc076 154px,#fecd85 156px,#feda94 158px,#fee6a3 160px,#fff3b1 162px,#feffbf 164px,#f1f9ba 166px,#e3f4b6 168px,#d6eeb2 170px,#c9e9ae 172px,#bce4a9 174px,#b2e0a6 176px,#acdda4 178px,#a3d7a5 180px,#99d1a7 182px,#90caa9 184px,#87c3aa 186px,#7dbdac 188px,#74b6ae 190px,#6aafaf 192px,#61a9b1 194px,#57a2b2 196px,#4e9cb4 198px,#4595b6 200px)"></div>
<div style="position:absolute;left:278px;top:245px;width:25px;height:200px;background:linear-gradient(#4595b6 0px,#4e9cb4 2px,#57a2b2 4px,#61a9b1 6px,#6aafaf 8px,#74b6ae 10px,#7dbdac 12px,#87c3aa 14px,#90caa9 16px,#99d1a7 18px,#a3d7a5 20px,#acdda4 22px,#b2e0a6 24px,#bce4a9 26px,#c9e9ae 28px,#d6efb2 30px,#e4f4b6 32px,#f1f9ba 34px,#feffbf 36px,#fff3b1 38px,#fee6a2 40px,#fed993 42px,#fecc84 44px,#fdc075 46px,#fdb367 48px,#f99f5a 50px,#f89957 52px,#f69455 54px,#f58e52 56px,#f38950 58px,#f2834d 60px,#f17d4a 62px,#ef7848 64px,#ee7245 66px,#ec6c43 68px,#eb6740 70px,#e9613d 72px,#e85b3b 74px,#e75839 76px,#e75839 78px,#e75739 80px,#e75739 82px,#e75638 84px,#e75638 86px,#e65538 88px,#e65538 90px,#e65538 92px,#e65437 94px,#e65437 96px,#e65337 98px,#e65337 100px,#e65337 102px,#e65437 104px,#e65437 106px,#e65538 108px,#e65538 110px,#e65538 112px,#e75638 114px,#e75638 116px,#e75739 118px,#e75739 120px,#e75839 122px,#e75839 124px,#e85b3b 126px,#e9613d 128px,#eb6740 130px,#ec6c43 132px,#ee7245 134px,#ef7848 136px,#f17d4a 138px,#f2834d 140px,#f38950 142px,#f58e52 144px,#f69455 146px,#f89957 148px,#f99f5a 150px,#fdb367 152px,#fdc075 154px,#fecc84 156px,#fed993 158px,#fee6a2 160px,#fff3b1 162px,#feffbf 164px,#f1f9ba 166px,#e4f4b6 168px,#d6efb2 170px,#c9e9ae 172px,#bce4a9 174px,#b2e0a6 176px,#acdda4 178px,#a3d7a5 180px,#99d1a7 182px,#90caa9 184px,#87c3aa 186px,#7dbdac 188px,#74b6ae 190px,#6aafaf 192px,#61a9b1 194px,#57a2b2 196px,#4e9cb4 198px,#4595b6 200px)"></div>
<div style="position:absolute;left:303px;top:245px;width:25px;height:200px;background:linear-gradient(#4595b6 0px,#4e9cb4 2px,#57a2b2 4px,#61a9b1 6px,#6aafaf 8px,#74b6ae 10px,#7dbdac 12px,#87c3aa 14px,#90caa9 16px,#99d1a7 18px,#a3d7a5 20px,#acdda4 22px,#b2e0a6 24px,#bce4a9 26px,#c9e9ae 28px,#d6efb2 30px,#e4f4b6 32px,#f1f9bb 34px,#ffffbf 36px,#fff3b1 38px,#fee6a2 40px,#fed993 42px,#fecc84 44px,#fdbf75 46px,#fdb266 48px,#f99e5a 50px,#f79857 52px,#f69354 54px,#f58d52 56px,#f3874f 58px,#f2824d 60px,#f07c4a 62px,#ef7747 64px,#ed7145 66px,#ec6b42 68px,#eb6640 70px,#e9603d 72px,#e85b3a 74px,#e75839 76px,#e75739 78px,#e75739 80px,#e75638 82px,#e65638 84px,#e65538 86px,#e65538 88px,#e65437 90px,#e65437 92px,#e65337 94px,#e65337 96px,#e65237 98px,#e65236 100px,#e65237 102px,#e65337 104px,#e65337 106px,#e65437 108px,#e65437 110px,#e65538 112px,#e65538 114px,#e65638 116px,#e75638 118px,#e75739 120px,#e75739 122px,#e75839 124px,#e85b3a 126px,#e9603d 128px,#eb6640 130px,#ec6b42 132px,#ed7145 134px,#ef7747 136px,#f07c4a 138px,#f2824d 140px,#f3874f 142px,#f58d52 144px,#f69354 146px,#f79857 148px,#f99e5a 150px,#fdb266 152px,#fdbf75 154px,#fecc84 156px,#fed993 158px,#fee6a2 160px,#fff3b1 162px,#ffffbf 164px,#f1f9bb 166px,#e4f4b6 168px,#d6efb2 170px,#c9e9ae 172px,#bce4a9 174px,#b2e0a6 176px,#acdda4 178px,#a3d7a5 180px,#99d1a7 182px,#90caa9 184px,#87c3aa 186px,#7dbdac 188px,#74b6ae 190px,#6aafaf 192px,#61a9b1 194px,#57a2b2 196px,#4e9cb4 198px,#4595b6 200px)"></div>
<div style="position:absolute;left:328px;top:245px;width:25px;height:200px;background:linear-gradient(#4595b6 0px,#4e9cb4 2px,#57a2b2 4px,#61a9b1 6px,#6aafaf 8px,#74b6ae 10px,#7dbdac 12px,#87c3aa 14px,#90caa9 16px,#99d1a7 18px,#a3d7a5 20px,#acdda4 22px,#b2e0a6 24px,#bce4a9 26px,#c9e9ae 28px,#d7efb2 30px,#e4f4b6 32px,#f1fabb 34px,#ffffbf 36px,#fff2b0 38px,#fee5a1 40px,#fed892 42px,#fecb83 44px,#fdbe74 46px,#fdb165 48px,#f99c59 50px,#f79756 52px,#f69154 54px,#f48c51 56px,#f3864f 58px,#f1814c 60px,#f07b49 62px,#ef7647 64px,#ed7044 66px,#ec6b42 68px,#ea653f 70px,#e95f3d 72px,#e85a3a 74px,#e75739 76px,#e75638 78px,#e75638 80px,#e65538 82px,#e65538 84px,#e65438 86px,#e65437 88px,#e65437 90px,#e65337 92px,#e65337 94px,#e65236 96px,#e55236 98px,#e55136 100px,#e55236 102px,#e65236 104px,#e65337 106px,#e65337 108px,#e65437 110px,#e65437 112px,#e65438 114px,#e65538 116px,#e65538 118px,#e75638 120px,#e75638 122px,#e75739 124px,#e85a3a 126px,#e95f3d 128px,#ea653f 130px,#ec6b42 132px,#ed7044 134px,#ef7647 136px,#f07b49 138px,#f1814c 140px,#f3864f 142px,#f48c51 144px,#f69154 146px,#f79756 148px,#f99c59 150px,#fdb165 152px,#fdbe74 154px,#fecb83 156px,#fed892 158px,#fee5a1 160px,#fff2b0 162px,#ffffbf 164px,#f1fabb 166px,#e4f4b6 168px,#d7efb2 170px,#c9e9ae 172px,#bce4a9 174px,#b2e0a6 176px,#acdda4 178px,#a3d7a5 180px,#99d1a7 182px,#90caa9 184px,#87c3aa 186px,#7dbdac 188px,#74b6ae 190px,#6aafaf 192px,#61a9b1 194px,#57a2b2 196px,#4e9cb4 198px,#4595b6 200px)"></div>
<div style="position:absolute;left:353px;top:245px;width:25px;height:200px;background:linear-gradient(#4595b6 0px,#4e9cb4 2px,#57a2b2 4px,#61a9b1 6px,#6aafaf 8px,#74b6ae 10px,#7dbdac 12px,#87c3aa 14px,#90caa9 16px,#99d1a7 18px,#a3d7a5 20px,#acdda4 22px,#b2e0a6 24px,#bce4a9 26px,#c9e9ae 28px,#d7efb2 30px,#e4f4b6 32px,#f2fabb 34px,#ffffbf 36px,#fff2b0 38px,#fee5a1 40px,#fed891 42px,#fecb82 44px,#fdbe73 46px,#fdb164 48px,#f89b58 50px,#f79656 52px,#f59053 54px,#f48b51 56px,#f3854e 58px,#f1804c 60px,#f07a49 62px,#ee7546 64px,#ed6f44 66px,#ec6941 68px,#ea643f 70px,#e95e3c 72px,#e7593a 74px,#e75638 76px,#e65538 78px,#e65538 80px,#e65538 82px,#e65437 84px,#e65437 86px,#e65337 88px,#e65337 90px,#e65236 92px,#e55236 94px,#e55136 96px,#e55136 98px,#e55036 100px,#e55136 102px,#e55136 104px,#e55236 106px,#e65236 108px,#e65337 110px,#e65337 112px,#e65437 114px,#e65437 116px,#e65538 118px,#e65538 120px,#e65538 122px,#e75638 124px,#e7593a 126px,#e95e3c 128px,#ea643f 130px,#ec6941 132px,#ed6f44 134px,#ee7546 136px,#f07a49 138px,#f1804c 140px,#f3854e 142px,#f48b51 144px,#f59053 146px,#f79656 148px,#f89b58 150px,#fdb164 152px,#fdbe73 154px,#fecb82 156px,#fed891 158px,#fee5a1 160px,#fff2b0 162px,#ffffbf 164px,#f2fabb 166px,#e4f4b6 168px,#d7efb2 170px,#c9e9ae 172px,#bce4a9 174px,#b2e0a6 176px,#acdda4 178px,#a3d7a5 180px,#99d1a7 182px,#90caa9 184px,#87c3aa 186px,#7dbdac 188px,#74b6ae 190px,#6aafaf 192px,#61a9b1 194px,#57a2b2 196px,#4e9cb4 198px,#4595b6 200px)"></div>
<div style="position:absolute;left:378px;top:245px;width:25px;height:200px;background:linear-gradient(#4595b6 0px,#4e9cb4 2px,#57a2b2 4px,#61a9b1 6px,#6aafaf 8px,#74b6ae 10px,#7dbdac 12px,#87c3aa 14px,#90caa9 16px,#99d1a7 18px,#a3d7a5 20px,#acdda4 22px,#b2e0a6 24px,#bce4a9 26px,#c9e9ae 28px,#d7efb2 30px,#e4f4b6 32px,#f2fabb 34px,#fffebe 36px,#fff1af 38px,#fee4a0 40px,#fed791 42px,#feca82 44px,#fdbd73 46px,#fdb063 48px,#f89a58 50px,#f69455 52px,#f58f53 54px,#f48950 56px,#f2844d 58px,#f17e4b 60px,#ef7948 62px,#ee7346 64px,#ed6e43 66px,#eb6841 68px,#ea633e 70px,#e85d3c 72px,#e75839 74px,#e65538 76px,#e65438 78px,#e65437 80px,#e65437 82px,#e65337 84px,#e65337 86px,#e65236 88px,#e55236 90px,#e55136 92px,#e55136 94px,#e55036 96px,#e55035 98px,#e54f35 100px,#e55035 102px,#e55036 104px,#e55136 106px,#e55136 108px,#e55236 110px,#e65236 112px,#e65337 114px,#e65337 116px,#e65437 118px,#e65437 120px,#e65438 122px,#e65538 124px,#e75839 126px,#e85d3c 128px,#ea633e 130px,#eb6841 132px,#ed6e43 134px,#ee7346 136px,#ef7948 138px,#f17e4b 140px,#f2844d 142px,#f48950 144px,#f58f53 146px,#f69455 148px,#f89a58 150px,#fdb063 152px,#fdbd73 154px,#feca82 156px,#fed791 158px,#fee4a0 160px,#fff1af 162px,#fffebe 164px,#f2fabb 166px,#e4f4b6 168px,#d7efb2 170px,#c9e9ae 172px,#bce4a9 174px,#b2e0a6 176px,#acdda4 178px,#a3d7a5 180px,#99d1a7 182px,#90caa9 184px,#87c3aa 186px,#7dbdac 188px,#74b6ae 190px,#6aafaf 192px,#61a9b1 194px,#57a2b2 196px,#4e9cb4 198px,#4595b6 200px)"></div>
<div style="position:absolute;left:403px;top:245px;width:25px;height:200px;background:linear-gradient(#4595b6 0px,#4e9cb4 2px,#57a2b2 4px,#61a9b1 6px,#6aafaf 8px,#74b6ae 10px,#7dbdac 12px,#87c3aa 14px,#90caa9 16px,#99d1a7 18px,#a3d7a5 20px,#acdda4 22px,#b2e0a6 24px,#bce4a9 26px,#c9e9ae 28px,#d7efb2 30px,#e5f4b7 32px,#f2fabb 34px,#fffebe 36px,#fff1af 38px,#fee4a0 40px,#fed790 42px,#feca81 44px,#fdbd72 46px,#fdaf63 48px,#f89957 50px,#f69355 52px,#f58e52 54px,#f3884f 56px,#f2834d 58px,#f17d4a 60px,#ef7848 62px,#ee7245 64px,#ec6d43 66px,#eb6740 68px,#ea623e 70px,#e85c3b 72px,#e75739 74px,#e65437 76px,#e65337 78px,#e65337 80px,#e65237 82px,#e65236 84px,#e55136 86px,#e55136 88px,#e55136 90px,#e55035 92px,#e55035 94px,#e54f35 96px,#e54f35 98px,#e54e35 100px,#e54f35 102px,#e54f35 104px,#e55035 106px,#e55035 108px,#e55136 110px,#e55136 112px,#e55136 114px,#e65236 116px,#e65237 118px,#e65337 120px,#e65337 122px,#e65437 124px,#e75739 126px,#e85c3b 128px,#ea623e 130px,#eb6740 132px,#ec6d43 134px,#ee7245 136px,#ef7848 138px,#f17d4a 140px,#f2834d 142px,#f3884f 144px,#f58e52 146px,#f69355 148px,#f89957 150px,#fdaf63 152px,#fdbd72 154px,#feca81 156px,#fed790 158px,#fee4a0 160px,#fff1af 162px,#fffebe 164px,#f2fabb 166px,#e5f4b7 168px,#d7efb2 170px,#c9e9ae 172px,#bce4a9 174px,#b2e0a6 176px,#acdda4 178px,#a3d7a5 180px,#99d1a7 182px,#90caa9 184px,#87c3aa 186px,#7dbdac 188px,#74b6ae 190px,#6aafaf 192px,#61a9b1 194px,#57a2b2 196px,#4e9cb4 198px,#4595b6 200px)"></div>
<div style="position:absolute;left:428px;top:245px;width:25px;height:200px;background:linear-gradient(#4595b6 0px,#4e9cb4 2px,#57a2b2 4px,#61a9b1 6px,#6aafaf 8px,#74b6ae 10px,#7dbdac 12px,#87c3aa 14px,#90caa9 16px,#99d1a7 18px,#a3d7a5 20px,#acdda4 22px,#b2e0a6 24px,#bce4a9 26px,#cae9ae 28px,#d7efb2 30px,#e5f4b7 32px,#f3fabb 34px,#fffebe 36px,#fff1ae 38px,#fee39f 40px,#fed690 42px,#fec980 44px,#fdbc71 46px,#fdaf62 48px,#f79756 50px,#f69254 52px,#f48c51 54px,#f3874f 56px,#f2814c 58px,#f07c4a 60px,#ef7647 62px,#ed7145 64px,#ec6b42 66px,#eb6640 68px,#e9613d 70px,#e85b3b 72px,#e65638 74px,#e65337 76px,#e65236 78px,#e55236 80px,#e55136 82px,#e55136 84px,#e55036 86px,#e55035 88px,#e54f35 90px,#e54f35 92px,#e54e35 94px,#e44e34 96px,#e44d34 98px,#e44d34 100px,#e44d34 102px,#e44e34 104px,#e54e35 106px,#e54f35 108px,#e54f35 110px,#e55035 112px,#e55036 114px,#e55136 116px,#e55136 118px,#e55236 120px,#e65236 122px,#e65337 124px,#e65638 126px,#e85b3b 128px,#e9613d 130px,#eb6640 132px,#ec6b42 134px,#ed7145 136px,#ef7647 138px,#f07c4a 140px,#f2814c 142px,#f3874f 144px,#f48c51 146px,#f69254 148px,#f79756 150px,#fdaf62 152px,#fdbc71 154px,#fec980 156px,#fed690 158px,#fee39f 160px,#fff1ae 162px,#fffebe 164px,#f3fabb 166px,#e5f4b7 168px,#d7efb2 170px,#cae9ae 172px,#bce4a9 174px,#b2e0a6 176px,#acdda4 178px,#a3d7a5 180px,#99d1a7 182px,#90caa9 184px,#87c3aa 186px,#7dbdac 188px,#74b6ae 190px,#6aafaf 192px,#61a9b1 194px,#57a2b2 196px,#4e9cb4 198px,#4595b6 200px)"></div>
<div style="position:absolute;left:453px;top:245px;width:25px;height:200px;background:linear-gradient(#4595b6 0px,#4e9cb4 2px,#57a2b2 4px,#61a9b1 6px,#6aafaf 8px,#74b6ae 10px,#7dbdac 12px,#87c3aa 14px,#90caa9 16px,#99d1a7 18px,#a3d7a5 20px,#acdda4 22px,#b2e0a6 24px,#bce4a9 26px,#cae9ae 28px,#d7efb2 30px,#e5f5b7 32px,#f3fabb 34px,#fffebd 36px,#fff0ae 38px,#fee39f 40px,#fed68f 42px,#fec980 44px,#fdbb71 46px,#fdae61 48px,#f79656 50px,#f59053 52px,#f48b51 54px,#f3864e 56px,#f1804c 58px,#f07b49 60px,#ee7547 62px,#ed7044 64px,#ec6a42 66px,#ea653f 68px,#e95f3d 70px,#e85a3a 72px,#e65437 74px,#e55136 76px,#e55136 78px,#e55036 80px,#e55035 82px,#e54f35 84px,#e54f35 86px,#e54f35 88px,#e54e35 90px,#e44e34 92px,#e44d34 94px,#e44d34 96px,#e44c34 98px,#e44c33 100px,#e44c34 102px,#e44d34 104px,#e44d34 106px,#e44e34 108px,#e54e35 110px,#e54f35 112px,#e54f35 114px,#e54f35 116px,#e55035 118px,#e55036 120px,#e55136 122px,#e55136 124px,#e65437 126px,#e85a3a 128px,#e95f3d 130px,#ea653f 132px,#ec6a42 134px,#ed7044 136px,#ee7547 138px,#f07b49 140px,#f1804c 142px,#f3864e 144px,#f48b51 146px,#f59053 148px,#f79656 150px,#fdae61 152px,#fdbb71 154px,#fec980 156px,#fed68f 158px,#fee39f 160px,#fff0ae 162px,#fffebd 164px,#f3fabb 166px,#e5f5b7 168px,#d7efb2 170px,#cae9ae 172px,#bce4a9 174px,#b2e0a6 176px,#acdda4 178px,#a3d7a5 180px,#99d1a7 182px,#90caa9 184px,#87c3aa 186px,#7dbdac 188px,#74b6ae 190px,#6aafaf 192px,#61a9b1 194px,#57a2b2 196px,#4e9cb4 198px,#4595b6 200px)"></div>
<div style="position:absolute;left:478px;top:245px;width:25px;height:200px;background:linear-gradient(#4595b6 0px,#4e9cb4 2px,#57a2b2 4px,#61a9b1 6px,#6aafaf 8px,#74b6ae 10px,#7dbdac 12px,#87c3aa 14px,#90caa9 16px,#99d1a7 18px,#a3d7a5 20px,#acdda4 22px,#b2e0a6 24px,#bce4a9 26px,#cae9ae 28px,#d8efb2 30px,#e5f5b7 32px,#f3fabb 34px,#fffdbd 36px,#fff0ad 38px,#fee39e 40px,#fed58f 42px,#fec87f 44px,#fdbb70 46px,#fdad61 48px,#f79555 50px,#f58f53 52px,#f48a50 54px,#f2844e 56px,#f17f4b 58px,#f07949 60px,#ee7446 62px,#ed6e43 64px,#eb6941 66px,#ea633e 68px,#e95e3c 70px,#e75839 72px,#e65337 74px,#e55035 76px,#e55035 78px,#e54f35 80px,#e54f35 82px,#e54e35 84px,#e44e34 86px,#e44d34 88px,#e44d34 90px,#e44c34 92px,#e44c33 94px,#e44b33 96px,#e44b33 98px,#e44a33 100px,#e44b33 102px,#e44b33 104px,#e44c33 106px,#e44c34 108px,#e44d34 110px,#e44d34 112px,#e44e34 114px,#e54e35 116px,#e54f35 118px,#e54f35 120px,#e55035 122px,#e55035 124px,#e65337 126px,#e75839 128px,#e95e3c 130px,#ea633e 132px,#eb6941 134px,#ed6e43 136px,#ee7446 138px,#f07949 140px,#f17f4b 142px,#f2844e 144px,#f48a50 146px,#f58f53 148px,#f79555 150px,#fdad61 152px,#fdbb70 154px,#fec87f 156px,#fed58f 158px,#fee39e 160px,#fff0ad 162px,#fffdbd 164px,#f3fabb 166px,#e5f5b7 168px,#d8efb2 170px,#cae9ae 172px,#bce4a9 174px,#b2e0a6 176px,#acdda4 178px,#a3d7a5 180px,#99d1a7 182px,#90caa9 184px,#87c3aa 186px,#7dbdac 188px,#74b6ae 190px,#6aafaf 192px,#61a9b1 194px,#57a2b2 196px,#4e9cb4 198px,#4595b6 200px)"></div>
<div style="position:absolute;left:503px;top:245px;width:25px;height:200px;background:linear-gradient(#4595b6 0px,#4e9cb4 2px,#57a2b2 4px,#61a9b1 6px,#6aafaf 8px,#74b6ae 10px,#7dbdac 12px,#87c3aa 14px,#90caa9 16px,#99d1a7 18px,#a3d7a5 20px,#acdda4 22px,#b2e0a6 24px,#bce4a9 26px,#cae9ae 28px,#d8efb2 30px,#e6f5b7 32px,#f3fabb 34px,#fffdbd 36px,#fff0ad 38px,#fee29e 40px,#fed58e 42px,#fec77f 44px,#fdba6f 46px,#fcac60 48px,#f69355 50px,#f58e52 52px,#f38850 54px,#f2834d 56px,#f17d4a 58px,#ef7848 60px,#ee7245 62px,#ec6d43 64px,#eb6740 66px,#ea623e 68px,#e85c3b 70px,#e75739 72px,#e55136 74px,#e54e35 76px,#e54e35 78px,#e44e34 80px,#e44d34 82px,#e44d34 84px,#e44c34 86px,#e44c33 88px,#e44b33 90px,#e44b33 92px,#e44a33 94px,#e34a33 96px,#e34932 98px,#e34932 100px,#e34932 102px,#e34a33 104px,#e44a33 106px,#e44b33 108px,#e44b33 110px,#e44c33 112px,#e44c34 114px,#e44d34 116px,#e44d34 118px,#e44e34 120px,#e54e35 122px,#e54e35 124px,#e55136 126px,#e75739 128px,#e85c3b 130px,#ea623e 132px,#eb6740 134px,#ec6d43 136px,#ee7245 138px,#ef7848 140px,#f17d4a 142px,#f2834d 144px,#f38850 146px,#f58e52 148px,#f69355 150px,#fcac60 152px,#fdba6f 154px,#fec77f 156px,#fed58e 158px,#fee29e 160px,#fff0ad 162px,#fffdbd 164px,#f3fabb 166px,#e6f5b7 168px,#d8efb2 170px,#cae9ae 172px,#bce4a9 174px,#b2e0a6 176px,#acdda4 178px,#a3d7a5 180px,#99d1a7 182px,#90caa9 184px,#87c3aa 186px,#7dbdac 188px,#74b6ae 190px,#6aafaf 192px,#61a9b1 194px,#57a2b2 196px,#4e9cb4 198px,#4595b6 200px)"></div>
<div style="position:absolute;left:528px;top:245px;width:25px;height:200px;background:linear-gradient(#4595b6 0px,#4e9cb4 2px,#57a2b2 4px,#61a9b1 6px,#6aafaf 8px,#74b6ae 10px,#7dbdac 12px,#87c3aa 14px,#90caa9 16px,#99d1a7 18px,#a3d7a5 20px,#acdda4 22px,#b2e0a6 24px,#bce4a9 26px,#caeaae 28px,#d8efb2 30px,#e6f5b7 32px,#f4fabb 34px,#fffdbc 36px,#ffefad 38px,#fee29d 40px,#fed48e 42px,#fec77e 44px,#fdba6e 46px,#fcab5f 48px,#f69254 50px,#f48c51 52px,#f3874f 54px,#f2814c 56px,#f07c4a 58px,#ef7647 60px,#ed7145 62px,#ec6b42 64px,#eb6640 66px,#e9603d 68px,#e85b3b 70px,#e65538 72px,#e55035 74px,#e44d34 76px,#e44c34 78px,#e44c34 80px,#e44b33 82px,#e44b33 84px,#e44b33 86px,#e44a33 88px,#e34a32 90px,#e34932 92px,#e34932 94px,#e34832 96px,#e34832 98px,#e34731 100px,#e34832 102px,#e34832 104px,#e34932 106px,#e34932 108px,#e34a32 110px,#e44a33 112px,#e44b33 114px,#e44b33 116px,#e44b33 118px,#e44c34 120px,#e44c34 122px,#e44d34 124px,#e55035 126px,#e65538 128px,#e85b3b 130px,#e9603d 132px,#eb6640 134px,#ec6b42 136px,#ed7145 138px,#ef7647 140px,#f07c4a 142px,#f2814c 144px,#f3874f 146px,#f48c51 148px,#f69254 150px,#fcab5f 152px,#fdba6e 154px,#fec77e 156px,#fed48e 158px,#fee29d 160px,#ffefad 162px,#fffdbc 164px,#f4fabb 166px,#e6f5b7 168px,#d8efb2 170px,#caeaae 172px,#bce4a9 174px,#b2e0a6 176px,#acdda4 178px,#a3d7a5 180px,#99d1a7 182px,#90caa9 184px,#87c3aa 186px,#7dbdac 188px,#74b6ae 190px,#6aafaf 192px,#61a9b1 194px,#57a2b2 196px,#4e9cb4 198px,#4595b6 200px)"></div>
<div style="position:absolute;left:553px;top:245px;width:25px;height:200px;background:linear-gradient(#4595b6 0px,#4e9cb4 2px,#57a2b2 4px,#61a9b1 6px,#6aafaf 8px,#74b6ae 10px,#7dbdac 12px,#87c3aa 14px,#90caa9 16px,#99d1a7 18px,#a3d7a5 20px,#acdda4 22px,#b2e0a6 24px,#bce4a9 26px,#caeaae 28px,#d8efb2 30px,#e6f5b7 32px,#f4fbbb 34px,#fffcbc 36px,#ffefac 38px,#fee19d 40px,#fed48d 42px,#fec67d 44px,#fdb96e 46px,#fca95f 48px,#f69153 50px,#f48b51 52px,#f3864e 54px,#f1804c 56px,#f07a49 58px,#ee7547 60px,#ed6f44 62px,#ec6a41 64px,#ea643f 66px,#e95f3c 68px,#e7593a 70px,#e65437 72px,#e54e35 74px,#e44b33 76px,#e44b33 78px,#e44a33 80px,#e34a33 82px,#e34932 84px,#e34932 86px,#e34832 88px,#e34832 90px,#e34731 92px,#e34731 94px,#e34631 96px,#e24631 98px,#e24631 100px,#e24631 102px,#e34631 104px,#e34731 106px,#e34731 108px,#e34832 110px,#e34832 112px,#e34932 114px,#e34932 116px,#e34a33 118px,#e44a33 120px,#e44b33 122px,#e44b33 124px,#e54e35 126px,#e65437 128px,#e7593a 130px,#e95f3c 132px,#ea643f 134px,#ec6a41 136px,#ed6f44 138px,#ee7547 140px,#f07a49 142px,#f1804c 144px,#f3864e 146px,#f48b51 148px,#f69153 150px,#fca95f 152px,#fdb96e 154px,#fec67d 156px,#fed48d 158px,#fee19d 160px,#ffefac 162px,#fffcbc 164px,#f4fbbb 166px,#e6f5b7 168px,#d8efb2 170px,#caeaae 172px,#bce4a9 174px,#b2e0a6 176px,#acdda4 178px,#a3d7a5 180px,#99d1a7 182px,#90caa9 184px,#87c3aa 186px,#7dbdac 188px,#74b6ae 190px,#6aafaf 192px,#61a9b1 194px,#57a2b2 196px,#4e9cb4 198px,#4595b6 200px)"></div>
<div style="position:absolute;left:578px;top:245px;width:25px;height:200px;background:linear-gradient(#4595b6 0px,#4e9cb4 2px,#57a2b2 4px,#61a9b1 6px,#6aafaf 8px,#74b6ae 10px,#7dbdac 12px,#87c3aa 14px,#90caa9 16px,#99d1a7 18px,#a3d7a5 20px,#acdda4 22px,#b2e0a6 24px,#bce4a9 26px,#caeaae 28px,#d8efb3 30px,#e6f5b7 32px,#f4fbbc 34px,#fffcbb 36px,#ffeeac 38px,#fee19c 40px,#fed38c 42px,#fec67d 44px,#fdb86d 46px,#fca85e 48px,#f58f53 50px,#f48a50 52px,#f2844e 54px,#f17f4b 56px,#ef7948 58px,#ee7346 60px,#ed6e43 62px,#eb6841 64px,#ea633e 66px,#e85d3c 68px,#e75839 70px,#e65236 72px,#e44c34 74px,#e34932 76px,#e34932 78px,#e34932 80px,#e34832 82px,#e34832 84px,#e34731 86px,#e34731 88px,#e34631 90px,#e24631 92px,#e24530 94px,#e24530 96px,#e24430 98px,#e24430 100px,#e24430 102px,#e24530 104px,#e24530 106px,#e24631 108px,#e34631 110px,#e34731 112px,#e34731 114px,#e34832 116px,#e34832 118px,#e34932 120px,#e34932 122px,#e34932 124px,#e44c34 126px,#e65236 128px,#e75839 130px,#e85d3c 132px,#ea633e 134px,#eb6841 136px,#ed6e43 138px,#ee7346 140px,#ef7948 142px,#f17f4b 144px,#f2844e 146px,#f48a50 148px,#f58f53 150px,#fca85e 152px,#fdb86d 154px,#fec67d 156px,#fed38c 158px,#fee19c 160px,#ffeeac 162px,#fffcbb 164px,#f4fbbc 166px,#e6f5b7 168px,#d8efb3 170px,#caeaae 172px,#bce4a9 174px,#b2e0a6 176px,#acdda4 178px,#a3d7a5 180px,#99d1a7 182px,#90caa9 184px,#87c3aa 186px,#7dbdac 188px,#74b6ae 190px,#6aafaf 192px,#61a9b1 194px,#57a2b2 196px,#4e9cb4 198px,#4595b6 200px)"></div>
<div style="position:absolute;left:603px;top:245px;width:25px;height:200px;background:linear-gradient(#4595b6 0px,#4e9cb4 2px,#57a2b2 4px,#61a9b1 6px,#6aafaf 8px,#74b6ae 10px,#7dbdac 12px,#87c3aa 14px,#90caa9 16px,#99d1a7 18px,#a3d7a5 20px,#acdda4 22px,#b2e0a6 24px,#bce4aa 26px,#caeaae 28px,#d8efb3 30px,#e6f5b7 32px,#f4fbbc 34px,#fffcbb 36px,#ffeeab 38px,#fee09c 40px,#fed38c 42px,#fec57c 44px,#fdb86c 46px,#fba75e 48px,#f58e52 50px,#f38850 52px,#f2834d 54px,#f17d4a 56px,#ef7848 58px,#ee7245 60px,#ec6c43 62px,#eb6740 64px,#e9613d 66px,#e85b3b 68px,#e75638 70px,#e55036 72px,#e44b33 74px,#e34832 76px,#e34731 78px,#e34731 80px,#e34631 82px,#e24631 84px,#e24530 86px,#e24530 88px,#e24430 90px,#e24430 92px,#e24330 94px,#e2432f 96px,#e2422f 98px,#e1422f 100px,#e2422f 102px,#e2432f 104px,#e24330 106px,#e24430 108px,#e24430 110px,#e24530 112px,#e24530 114px,#e24631 116px,#e34631 118px,#e34731 120px,#e34731 122px,#e34832 124px,#e44b33 126px,#e55036 128px,#e75638 130px,#e85b3b 132px,#e9613d 134px,#eb6740 136px,#ec6c43 138px,#ee7245 140px,#ef7848 142px,#f17d4a 144px,#f2834d 146px,#f38850 148px,#f58e52 150px,#fba75e 152px,#fdb86c 154px,#fec57c 156px,#fed38c 158px,#fee09c 160px,#ffeeab 162px,#fffcbb 164px,#f4fbbc 166px,#e6f5b7 168px,#d8efb3 170px,#caeaae 172px,#bce4aa 174px,#b2e0a6 176px,#acdda4 178px,#a3d7a5 180px,#99d1a7 182px,#90caa9 184px,#87c3aa 186px,#7dbdac 188px,#74b6ae 190px,#6aafaf 192px,#61a9b1 194px,#57a2b2 196px,#4e9cb4 198px,#4595b6 200px)"></div>
<div style="position:absolute;left:628px;top:245px;width:25px;height:200px;background:linear-gradient(#4595b6 0px,#4e9cb4 2px,#57a2b2 4px,#61a9b1 6px,#6aafaf 8px,#74b6ae 10px,#7dbdac 12px,#87c3aa 14px,#90caa9 16px,#99d1a7 18px,#a3d7a5 20px,#acdda4 22px,#b2e0a6 24px,#bce4aa 26px,#caeaae 28px,#d8efb3 30px,#e7f5b7 32px,#f5fbbc 34px,#fffbbb 36px,#ffeeab 38px,#fee09b 40px,#fed28b 42px,#fec57b 44px,#fdb76c 46px,#fba65d 48px,#f48d52 50px,#f3874f 52px,#f2814c 54px,#f07c4a 56px,#ef7647 58px,#ed7044 60px,#ec6b42 62px,#ea653f 64px,#e95f3d 66px,#e75a3a 68px,#e65437 70px,#e54e35 72px,#e34932 74px,#e24631 76px,#e24530 78px,#e24530 80px,#e24430 82px,#e24430 84px,#e24330 86px,#e2432f 88px,#e2422f 90px,#e1422f 92px,#e1412f 94px,#e1412e 96px,#e1402e 98px,#e1402e 100px,#e1402e 102px,#e1412e 104px,#e1412f 106px,#e1422f 108px,#e2422f 110px,#e2432f 112px,#e24330 114px,#e24430 116px,#e24430 118px,#e24530 120px,#e24530 122px,#e24631 124px,#e34932 126px,#e54e35 128px,#e65437 130px,#e75a3a 132px,#e95f3d 134px,#ea653f 136px,#ec6b42 138px,#ed7044 140px,#ef7647 142px,#f07c4a 144px,#f2814c 146px,#f3874f 148px,#f48d52 150px,#fba65d 152px,#fdb76c 154px,#fec57b 156px,#fed28b 158px,#fee09b 160px,#ffeeab 162px,#fffbbb 164px,#f5fbbc 166px,#e7f5b7 168px,#d8efb3 170px,#caeaae 172px,#bce4aa 174px,#b2e0a6 176px,#acdda4 178px,#a3d7a5 180px,#99d1a7 182px,#90caa9 184px,#87c3aa 186px,#7dbdac 188px,#74b6ae 190px,#6aafaf 192px,#61a9b1 194px,#57a2b2 196px,#4e9cb4 198px,#4595b6 200px)"></div>
<div style="position:absolute;left:653px;top:245px;width:25px;height:200px;background:linear-gradient(#4595b6 0px,#4e9cb4 2px,#57a2b2 4px,#61a9b1 6px,#6aafaf 8px,#74b6ae 10px,#7dbdac 12px,#87c3aa 14px,#90caa9 16px,#99d1a7 18px,#a3d7a5 20px,#acdda4 22px,#b2e0a6 24px,#bce4aa 26px,#caeaae 28px,#d9efb3 30px,#e7f5b7 32px,#f5fbbc 34px,#fffbba 36px,#ffedaa 38px,#fee09b 40px,#fed28b 42px,#fec47b 44px,#fdb76b 46px,#fba55d 48px,#f48b51 50px,#f3864e 52px,#f1804c 54px,#f07a49 56px,#ee7446 58px,#ed6f44 60px,#eb6941 62px,#ea633e 64px,#e85e3c 66px,#e75839 68px,#e65236 70px,#e44c34 72px,#e34731 74px,#e24430 76px,#e2432f 78px,#e2432f 80px,#e1422f 82px,#e1422f 84px,#e1412f 86px,#e1412e 88px,#e1402e 90px,#e1402e 92px,#e13f2e 94px,#e13f2d 96px,#e13e2d 98px,#e03e2d 100px,#e13e2d 102px,#e13f2d 104px,#e13f2e 106px,#e1402e 108px,#e1402e 110px,#e1412e 112px,#e1412f 114px,#e1422f 116px,#e1422f 118px,#e2432f 120px,#e2432f 122px,#e24430 124px,#e34731 126px,#e44c34 128px,#e65236 130px,#e75839 132px,#e85e3c 134px,#ea633e 136px,#eb6941 138px,#ed6f44 140px,#ee7446 142px,#f07a49 144px,#f1804c 146px,#f3864e 148px,#f48b51 150px,#fba55d 152px,#fdb76b 154px,#fec47b 156px,#fed28b 158px,#fee09b 160px,#ffedaa 162px,#fffbba 164px,#f5fbbc 166px,#e7f5b7 168px,#d9efb3 170px,#caeaae 172px,#bce4aa 174px,#b2e0a6 176px,#acdda4 178px,#a3d7a5 180px,#99d1a7 182px,#90caa9 184px,#87c3aa 186px,#7dbdac 188px,#74b6ae 190px,#6aafaf 192px,#61a9b1 194px,#57a2b2 196px,#4e9cb4 198px,#4595b6 200px)"></div>
<div style="position:absolute;left:678px;top:245px;width:25px;height:200px;background:linear-gradient(#4595b6 0px,#4e9cb4 2px,#57a2b2 4px,#61a9b1 6px,#6aafaf 8px,#74b6ae 10px,#7dbdac 12px,#87c3aa 14px,#90caa9 16px,#99d1a7 18px,#a3d7a5 20px,#acdda4 22px,#b2e0a6 24px,#bce4aa 26px,#caeaae 28px,#d9f0b3 30px,#e7f5b7 32px,#f5fbbc 34px,#fffbba 36px,#ffedaa 38px,#fedf9a 40px,#fed18a 42px,#fec47a 44px,#fdb66a 46px,#faa35c 48px,#f48a50 50px,#f2844e 52px,#f17e4b 54px,#ef7948 56px,#ee7346 58px,#ec6d43 60px,#eb6740 62px,#e9613e 64px,#e85c3b 66px,#e75638 68px,#e55036 70px,#e44a33 72px,#e24530 74px,#e1412f 76px,#e1412e 78px,#e1402e 80px,#e1402e 82px,#e13f2e 84px,#e13f2e 86px,#e13f2d 88px,#e03e2d 90px,#e03e2d 92px,#e03d2d 94px,#e03d2c 96px,#e03c2c 98px,#e03c2c 100px,#e03c2c 102px,#e03d2c 104px,#e03d2d 106px,#e03e2d 108px,#e03e2d 110px,#e13f2d 112px,#e13f2e 114px,#e13f2e 116px,#e1402e 118px,#e1402e 120px,#e1412e 122px,#e1412f 124px,#e24530 126px,#e44a33 128px,#e55036 130px,#e75638 132px,#e85c3b 134px,#e9613e 136px,#eb6740 138px,#ec6d43 140px,#ee7346 142px,#ef7948 144px,#f17e4b 146px,#f2844e 148px,#f48a50 150px,#faa35c 152px,#fdb66a 154px,#fec47a 156px,#fed18a 158px,#fedf9a 160px,#ffedaa 162px,#fffbba 164px,#f5fbbc 166px,#e7f5b7 168px,#d9f0b3 170px,#caeaae 172px,#bce4aa 174px,#b2e0a6 176px,#acdda4 178px,#a3d7a5 180px,#99d1a7 182px,#90caa9 184px,#87c3aa 186px,#7dbdac 188px,#74b6ae 190px,#6aafaf 192px,#61a9b1 194px,#57a2b2 196px,#4e9cb4 198px,#4595b6 200px)"></div>
<div style="position:absolute;left:703px;top:245px;width:25px;height:200px;background:linear-gradient(#4595b6 0px,#4e9cb4 2px,#57a2b2 4px,#61a9b1 6px,#6aafaf 8px,#74b6ae 10px,#7dbdac 12px,#87c3aa 14px,#90caa9 16px,#99d1a7 18px,#a3d7a5 20px,#acdda4 22px,#b2e0a6 24px,#bce4aa 26px,#cbeaae 28px,#d9f0b3 30px,#e7f5b7 32px,#f5fbbc 34px,#fffaba 36px,#ffedaa 38px,#fedf9a 40px,#fed18a 42px,#fec37a 44px,#fdb56a 46px,#faa25b 48px,#f38950 50px,#f2834d 52px,#f07d4a 54px,#ef7748 56px,#ee7145 58px,#ec6b42 60px,#eb663f 62px,#e9603d 64px,#e85a3a 66px,#e65437 68px,#e54e35 70px,#e34832 72px,#e2422f 74px,#e13f2e 76px,#e13f2d 78px,#e03e2d 80px,#e03e2d 82px,#e03d2d 84px,#e03d2d 86px,#e03c2c 88px,#e03c2c 90px,#e03b2c 92px,#e03b2c 94px,#e03a2b 96px,#df3a2b 98px,#df392b 100px,#df3a2b 102px,#e03a2b 104px,#e03b2c 106px,#e03b2c 108px,#e03c2c 110px,#e03c2c 112px,#e03d2d 114px,#e03d2d 116px,#e03e2d 118px,#e03e2d 120px,#e13f2d 122px,#e13f2e 124px,#e2422f 126px,#e34832 128px,#e54e35 130px,#e65437 132px,#e85a3a 134px,#e9603d 136px,#eb663f 138px,#ec6b42 140px,#ee7145 142px,#ef7748 144px,#f07d4a 146px,#f2834d 148px,#f38950 150px,#faa25b 152px,#fdb56a 154px,#fec37a 156px,#fed18a 158px,#fedf9a 160px,#ffedaa 162px,#fffaba 164px,#f5fbbc 166px,#e7f5b7 168px,#d9f0b3 170px,#cbeaae 172px,#bce4aa 174px,#b2e0a6 176px,#acdda4 178px,#a3d7a5 180px,#99d1a7 182px,#90caa9 184px,#87c3aa 186px,#7dbdac 188px,#74b6ae 190px,#6aafaf 192px,#61a9b1 194px,#57a2b2 196px,#4e9cb4 198px,#4595b6 200px)"></div>
<div style="position:absolute;left:728px;top:245px;width:25px;height:200px;background:linear-gradient(#4595b6 0px,#4e9cb4 2px,#57a2b2 4px,#61a9b1 6px,#6aafaf 8px,#74b6ae 10px,#7dbdac 12px,#87c3aa 14px,#90caa9 16px,#99d1a7 18px,#a3d7a5 20px,#acdda4 22px,#b2e0a6 24px,#bce4aa 26px,#cbeaae 28px,#d9f0b3 30px,#e7f5b7 32px,#f6fbbc 34px,#fffab9 36px,#ffeca9 38px,#fede99 40px,#fed089 42px,#fec379 44px,#fdb569 46px,#faa15b 48px,#f3874f 50px,#f2814c 52px,#f07b4a 54px,#ef7647 56px,#ed7044 58px,#ec6a41 60px,#ea643f 62px,#e95e3c 64px,#e75839 66px,#e55236 68px,#e44c34 70px,#e24631 72px,#e1402e 74px,#e03d2d 76px,#e03c2c 78px,#e03c2c 80px,#e03b2c 82px,#e03b2c 84px,#e03a2b 86px,#df3a2b 88px,#df392b 90px,#df392b 92px,#df382b 94px,#df382a 96px,#df382a 98px,#df372a 100px,#df382a 102px,#df382a 104px,#df382b 106px,#df392b 108px,#df392b 110px,#df3a2b 112px,#e03a2b 114px,#e03b2c 116px,#e03b2c 118px,#e03c2c 120px,#e03c2c 122px,#e03d2d 124px,#e1402e 126px,#e24631 128px,#e44c34 130px,#e55236 132px,#e75839 134px,#e95e3c 136px,#ea643f 138px,#ec6a41 140px,#ed7044 142px,#ef7647 144px,#f07b4a 146px,#f2814c 148px,#f3874f 150px,#faa15b 152px,#fdb569 154px,#fec379 156px,#fed089 158px,#fede99 160px,#ffeca9 162px,#fffab9 164px,#f6fbbc 166px,#e7f5b7 168px,#d9f0b3 170px,#cbeaae 172px,#bce4aa 174px,#b2e0a6 176px,#acdda4 178px,#a3d7a5 180px,#99d1a7 182px,#90caa9 184px,#87c3aa 186px,#7dbdac 188px,#74b6ae 190px,#6aafaf 192px,#61a9b1 194px,#57a2b2 196px,#4e9cb4 198px,#4595b6 200px)"></div>
<div style="position:absolute;left:753px;top:245px;width:25px;height:200px;background:linear-gradient(#4595b6 0px,#4e9cb4 2px,#57a2b2 4px,#61a9b1 6px,#6aafaf 8px,#74b6ae 10px,#7dbdac 12px,#87c3aa 14px,#90caa9 16px,#99d1a7 18px,#a3d7a5 20px,#acdda4 22px,#b2e0a6 24px,#bce4aa 26px,#cbeaae 28px,#d9f0b3 30px,#e8f6b7 32px,#f6fbbc 34px,#fffab9 36px,#ffeca9 38px,#fede99 40px,#fed088 42px,#fdc278 44px,#fdb468 46px,#f9a05a 48px,#f3864f 50px,#f1804c 52px,#f07a49 54px,#ee7446 56px,#ed6e43 58px,#eb6841 60px,#ea623e 62px,#e85c3b 64px,#e65638 66px,#e55035 68px,#e34a33 70px,#e24430 72px,#e03e2d 74px,#df3a2b 76px,#df3a2b 78px,#df392b 80px,#df392b 82px,#df382b 84px,#df382a 86px,#df372a 88px,#df372a 90px,#df362a 92px,#de3629 94px,#de3629 96px,#de3529 98px,#de3529 100px,#de3529 102px,#de3629 104px,#de3629 106px,#df362a 108px,#df372a 110px,#df372a 112px,#df382a 114px,#df382b 116px,#df392b 118px,#df392b 120px,#df3a2b 122px,#df3a2b 124px,#e03e2d 126px,#e24430 128px,#e34a33 130px,#e55035 132px,#e65638 134px,#e85c3b 136px,#ea623e 138px,#eb6841 140px,#ed6e43 142px,#ee7446 144px,#f07a49 146px,#f1804c 148px,#f3864f 150px,#f9a05a 152px,#fdb468 154px,#fdc278 156px,#fed088 158px,#fede99 160px,#ffeca9 162px,#fffab9 164px,#f6fbbc 166px,#e8f6b7 168px,#d9f0b3 170px,#cbeaae 172px,#bce4aa 174px,#b2e0a6 176px,#acdda4 178px,#a3d7a5 180px,#99d1a7 182px,#90caa9 184px,#87c3aa 186px,#7dbdac 188px,#74b6ae 190px,#6aafaf 192px,#61a9b1 194px,#57a2b2 196px,#4e9cb4 198px,#4595b6 200px)"></div>
<div style="position:absolute;left:778px;top:245px;width:25px;height:200px;background:linear-gradient(#4595b6 0px,#4e9cb4 2px,#57a2b2 4px,#61a9b1 6px,#6aafaf 8px,#74b6ae 10px,#7dbdac 12px,#87c3aa 14px,#90caa9 16px,#99d1a7 18px,#a3d7a5 20px,#acdda4 22px,#b2e0a6 24px,#bce4aa 26px,#cbeaae 28px,#d9f0b3 30px,#e8f6b8 32px,#f6fbbc 34px,#fff9b9 36px,#ffeba8 38px,#fedd98 40px,#fecf88 42px,#fdc278 44px,#fdb467 46px,#f99e5a 48px,#f2854e 50px,#f17f4b 52px,#ef7848 54px,#ee7245 56px,#ec6c43 58px,#eb6640 60px,#e9603d 62px,#e85a3a 64px,#e65437 66px,#e44d34 68px,#e34731 70px,#e1412f 72px,#e03b2c 74px,#df382a 76px,#df372a 78px,#df372a 80px,#de362a 82px,#de3629 84px,#de3529 86px,#de3529 88px,#de3429 90px,#de3428 92px,#de3328 94px,#de3328 96px,#de3328 98px,#dd3228 100px,#de3328 102px,#de3328 104px,#de3328 106px,#de3428 108px,#de3429 110px,#de3529 112px,#de3529 114px,#de3629 116px,#de362a 118px,#df372a 120px,#df372a 122px,#df382a 124px,#e03b2c 126px,#e1412f 128px,#e34731 130px,#e44d34 132px,#e65437 134px,#e85a3a 136px,#e9603d 138px,#eb6640 140px,#ec6c43 142px,#ee7245 144px,#ef7848 146px,#f17f4b 148px,#f2854e 150px,#f99e5a 152px,#fdb467 154px,#fdc278 156px,#fecf88 158px,#fedd98 160px,#ffeba8 162px,#fff9b9 164px,#f6fbbc 166px,#e8f6b8 168px,#d9f0b3 170px,#cbeaae 172px,#bce4aa 174px,#b2e0a6 176px,#acdda4 178px,#a3d7a5 180px,#99d1a7 182px,#90caa9 184px,#87c3aa 186px,#7dbdac 188px,#74b6ae 190px,#6aafaf 192px,#61a9b1 194px,#57a2b2 196px,#4e9cb4 198px,#4595b6 200px)"></div>
<div style="position:absolute;left:803px;top:245px;width:25px;height:200px;background:linear-gradient(#4595b6 0px,#4e9cb4 2px,#57a2b2 4px,#61a9b1 6px,#6aafaf 8px,#74b6ae 10px,#7dbdac 12px,#87c3aa 14px,#90caa9 16px,#99d1a7 18px,#a3d7a5 20px,#acdda4 22px,#b2e0a6 24px,#bce4aa 26px,#cbeaae 28px,#d9f0b3 30px,#e8f6b8 32px,#f7fcbc 34px,#fff9b8 36px,#ffeba8 38px,#fedd98 40px,#fecf87 42px,#fdc177 44px,#fdb367 46px,#f99d59 48px,#f2834d 50px,#f17d4a 52px,#ef7748 54px,#ed7145 56px,#ec6a42 58px,#ea643f 60px,#e95e3c 62px,#e75839 64px,#e55136 66px,#e44b33 68px,#e24530 70px,#e13f2d 72px,#df382b 74px,#de3529 76px,#de3529 78px,#de3429 80px,#de3428 82px,#de3328 84px,#de3328 86px,#dd3228 88px,#dd3227 90px,#dd3127 92px,#dd3127 94px,#dd3027 96px,#dd3027 98px,#dd2f26 100px,#dd3027 102px,#dd3027 104px,#dd3127 106px,#dd3127 108px,#dd3227 110px,#dd3228 112px,#de3328 114px,#de3328 116px,#de3428 118px,#de3429 120px,#de3529 122px,#de3529 124px,#df382b 126px,#e13f2d 128px,#e24530 130px,#e44b33 132px,#e55136 134px,#e75839 136px,#e95e3c 138px,#ea643f 140px,#ec6a42 142px,#ed7145 144px,#ef7748 146px,#f17d4a 148px,#f2834d 150px,#f99d59 152px,#fdb367 154px,#fdc177 156px,#fecf87 158px,#fedd98 160px,#ffeba8 162px,#fff9b8 164px,#f7fcbc 166px,#e8f6b8 168px,#d9f0b3 170px,#cbeaae 172px,#bce4aa 174px,#b2e0a6 176px,#acdda4 178px,#a3d7a5 180px,#99d1a7 182px,#90caa9 184px,#87c3aa 186px,#7dbdac 188px,#74b6ae 190px,#6aafaf 192px,#61a9b1 194px,#57a2b2 196px,#4e9cb4 198px,#4595b6 200px)"></div>
<div style="position:absolute;left:828px;top:245px;width:25px;height:200px;background:linear-gradient(#4595b6 0px,#4e9cb4 2px,#57a2b2 4px,#61a9b1 6px,#6aafaf 8px,#74b6ae 10px,#7dbdac 12px,#87c3aa 14px,#90caa9 16px,#99d1a7 18px,#a3d7a5 20px,#acdda4 22px,#b2e0a6 24px,#bce4aa 26px,#cbeaae 28px,#daf0b3 30px,#e8f6b8 32px,#f7fcbc 34px,#fff9b8 36px,#feeba7 38px,#fedd97 40px,#fecf87 42px,#fdc076 44px,#fdb266 46px,#f89c59 48px,#f2824d 50px,#f07c4a 52px,#ef7547 54px,#ed6f44 56px,#eb6941 58px,#ea623e 60px,#e85c3b 62px,#e65638 64px,#e54f35 66px,#e34932 68px,#e2422f 70px,#e03c2c 72px,#de3629 74px,#dd3228 76px,#dd3228 78px,#dd3127 80px,#dd3127 82px,#dd3027 84px,#dd3027 86px,#dd2f26 88px,#dd2f26 90px,#dc2f26 92px,#dc2e26 94px,#dc2e26 96px,#dc2d25 98px,#dc2d25 100px,#dc2d25 102px,#dc2e26 104px,#dc2e26 106px,#dc2f26 108px,#dd2f26 110px,#dd2f26 112px,#dd3027 114px,#dd3027 116px,#dd3127 118px,#dd3127 120px,#dd3228 122px,#dd3228 124px,#de3629 126px,#e03c2c 128px,#e2422f 130px,#e34932 132px,#e54f35 134px,#e65638 136px,#e85c3b 138px,#ea623e 140px,#eb6941 142px,#ed6f44 144px,#ef7547 146px,#f07c4a 148px,#f2824d 150px,#f89c59 152px,#fdb266 154px,#fdc076 156px,#fecf87 158px,#fedd97 160px,#feeba7 162px,#fff9b8 164px,#f7fcbc 166px,#e8f6b8 168px,#daf0b3 170px,#cbeaae 172px,#bce4aa 174px,#b2e0a6 176px,#acdda4 178px,#a3d7a5 180px,#99d1a7 182px,#90caa9 184px,#87c3aa 186px,#7dbdac 188px,#74b6ae 190px,#6aafaf 192px,#61a9b1 194px,#57a2b2 196px,#4e9cb4 198px,#4595b6 200px)"></div>
<div style="position:absolute;left:853px;top:245px;width:3px;height:200px;background:linear-gradient(#4595b6 0px,#4e9cb4 2px,#57a2b2 4px,#61a9b1 6px,#6aafaf 8px,#74b6ae 10px,#7dbdac 12px,#87c3aa 14px,#90caa9 16px,#99d1a7 18px,#a3d7a5 20px,#acdda4 22px,#b2e0a6 24px,#bce4aa 26px,#cbeaae 28px,#daf0b3 30px,#e8f6b8 32px,#f7fcbc 34px,#fff9b8 36px,#feeaa7 38px,#fedc97 40px,#fece86 42px,#fdc076 44px,#fdb266 46px,#f89b58 48px,#f2814c 50px,#f07b49 52px,#ee7546 54px,#ed6e43 56px,#eb6840 58px,#e9613d 60px,#e85b3a 62px,#e65437 64px,#e54e35 66px,#e34832 68px,#e1412f 70px,#e03b2c 72px,#de3429 74px,#dd3127 76px,#dd3027 78px,#dd3027 80px,#dd2f26 82px,#dd2f26 84px,#dc2e26 86px,#dc2e26 88px,#dc2d25 90px,#dc2d25 92px,#dc2c25 94px,#dc2c25 96px,#dc2c25 98px,#dc2b24 100px,#dc2c25 102px,#dc2c25 104px,#dc2c25 106px,#dc2d25 108px,#dc2d25 110px,#dc2e26 112px,#dc2e26 114px,#dd2f26 116px,#dd2f26 118px,#dd3027 120px,#dd3027 122px,#dd3127 124px,#de3429 126px,#e03b2c 128px,#e1412f 130px,#e34832 132px,#e54e35 134px,#e65437 136px,#e85b3a 138px,#e9613d 140px,#eb6840 142px,#ed6e43 144px,#ee7546 146px,#f07b49 148px,#f2814c 150px,#f89b58 152px,#fdb266 154px,#fdc076 156px,#fece86 158px,#fedc97 160px,#feeaa7 162px,#fff9b8 164px,#f7fcbc 166px,#e8f6b8 168px,#daf0b3 170px,#cbeaae 172px,#bce4aa 174px,#b2e0a6 176px,#acdda4 178px,#a3d7a5 180px,#99d1a7 182px,#90caa9 184px,#87c3aa 186px,#7dbdac 188px,#74b6ae 190px,#6aafaf 192px,#61a9b1 194px,#57a2b2 196px,#4e9cb4 198px,#4595b6 200px)"></div>
<div style="position:absolute;left:178px;top:245px;width:678px;height:1px;background:rgba(20,15,15,0.60)"></div>
<div style="position:absolute;left:178px;top:270px;width:678px;height:1px;background:rgba(20,15,15,0.85)"></div>
<div style="position:absolute;left:178px;top:295px;width:678px;height:1px;background:rgba(20,15,15,0.85)"></div>
<div style="position:absolute;left:178px;top:320px;width:678px;height:1px;background:repeating-linear-gradient(to right,rgba(50,12,10,0.5) 0 2px,rgba(50,12,10,0.3) 2px 3px)"></div>
<div style="position:absolute;left:178px;top:345px;width:678px;height:1px;background:repeating-linear-gradient(to right,rgba(50,12,10,0.5) 0 2px,rgba(50,12,10,0.3) 2px 3px)"></div>
<div style="position:absolute;left:178px;top:370px;width:678px;height:1px;background:rgba(20,15,15,0.75)"></div>
<div style="position:absolute;left:178px;top:395px;width:678px;height:1px;background:rgba(20,15,15,0.80)"></div>
<div style="position:absolute;left:178px;top:420px;width:678px;height:1px;background:rgba(20,15,15,0.85)"></div>
<div style="position:absolute;left:178px;top:445px;width:678px;height:1px;background:rgba(20,15,15,0.90)"></div>
<div style="position:absolute;left:213px;top:245px;width:1px;height:201px;background:rgba(20,15,15,0.55)"></div>
<div style="position:absolute;left:263px;top:245px;width:1px;height:201px;background:rgba(20,15,15,0.85)"></div>
<div style="position:absolute;left:313px;top:245px;width:1px;height:201px;background:rgba(20,15,15,0.85)"></div>
<div style="position:absolute;left:363px;top:245px;width:1px;height:201px;background:rgba(20,15,15,0.85)"></div>
<div style="position:absolute;left:413px;top:245px;width:1px;height:201px;background:rgba(20,15,15,0.60)"></div>
<div style="position:absolute;left:463px;top:245px;width:1px;height:201px;background:rgba(20,15,15,0.15)"></div>
<div style="position:absolute;left:513px;top:245px;width:1px;height:201px;background:rgba(20,15,15,0.90)"></div>
<div style="position:absolute;left:562px;top:245px;width:1px;height:201px;background:rgba(20,15,15,0.90)"></div>
<div style="position:absolute;left:613px;top:245px;width:1px;height:201px;background:rgba(20,15,15,0.18)"></div>
<div style="position:absolute;left:662px;top:245px;width:1px;height:201px;background:rgba(20,15,15,0.20)"></div>
<div style="position:absolute;left:712px;top:245px;width:1px;height:201px;background:rgba(20,15,15,0.85)"></div>
<div style="position:absolute;left:762px;top:245px;width:1px;height:201px;background:rgba(20,15,15,0.90)"></div>
<div style="position:absolute;left:812px;top:245px;width:1px;height:201px;background:rgba(20,15,15,0.90)"></div>
<svg style="position:absolute;left:0;top:0" width="1200" height="626" viewBox="0 0 1200 626"><g fill="#4a4a4a"><rect x="743" y="213.5" width="2" height="7" rx="1"/><rect x="745.2" y="212" width="2" height="8" rx="1"/><rect x="747.4" y="212.5" width="2" height="8" rx="1"/><rect x="749.6" y="214" width="2" height="7" rx="1"/><path d="M743 218 h8.6 v3 c0 2 -1 4 -2.5 4 h-4 c-1 0 -1.5 -1 -2.2 -2 l-3 -3.5 c-0.6 -0.8 0.3 -1.6 1.1 -1 l2 1.5z"/></g><path d="M743.5 218.5 h7.6 v3 c0 2 -1 3.5 -2.2 3.5 h-3.8 c-0.8 0 -1.2 -0.8 -1.8 -1.6 l-2.8 -3.3 c-0.3 -0.4 0.1 -0.8 0.5 -0.5 l2.5 1.9z" fill="#4a4a4a"/></svg>
<div style="position:absolute;left:857px;top:57px;width:343px;height:550px;background:#eff0f1"></div>
<div style="position:absolute;left:857px;top:57px;width:1px;height:550px;background:#d0d2d3"></div>
<div class="t" style="left:863.5px;top:59.05px;font-size:8.8px;line-height:8.8px;font-weight:400;color:#232629;transform:scaleX(1.0323);transform-origin:0 0;">Layer Styling</div>
<div style="position:absolute;left:862px;top:71px;width:337px;height:15px;background:linear-gradient(#fdfdfd,#f1f2f3);box-sizing:border-box;border:1px solid #dfe1e2;border-left-color:#b4b6b7;border-radius:2px"></div>
<div class="t" style="left:878.5px;top:74.05px;font-size:8.8px;line-height:8.8px;font-weight:400;color:#232629;transform:scaleX(1.0092);transform-origin:0 0;">trap_steady_05_3D</div>
<div style="position:absolute;left:862px;top:110px;width:24px;height:496px;background:#5b5b5b"></div>
<div style="position:absolute;left:888px;top:109px;width:311px;height:1px;background:#b9bbbc"></div>
<div style="position:absolute;left:888px;top:116px;width:311px;height:120px;background:#fcfcfc;box-sizing:border-box;border:1px solid #b9bbbc;border-right-color:#e4e6e7"></div>
<div style="position:absolute;left:889px;top:117px;width:309px;height:12px;background:linear-gradient(#fbfbfb,#eceded)"></div>
<div style="position:absolute;left:889px;top:129px;width:309px;height:1px;background:#b9bbbc"></div>
<div class="t" style="left:890.6px;top:119.05px;font-size:8.8px;line-height:8.8px;font-weight:400;color:#232629;transform:scaleX(0.9702);transform-origin:0 0;">Groups</div>
<div class="t" style="left:903.8px;top:131.05px;font-size:8.8px;line-height:8.8px;font-weight:400;color:#232629;transform:scaleX(1.0166);transform-origin:0 0;">Bed Elevation</div>
<div class="t" style="left:903.8px;top:142.05px;font-size:8.8px;line-height:8.8px;font-weight:400;color:#232629;transform:scaleX(1.0540);transform-origin:0 0;">temperature</div>
<div class="t" style="left:903.8px;top:152.05px;font-size:8.8px;line-height:8.8px;font-weight:400;color:#232629;transform:scaleX(1.0564);transform-origin:0 0;">velocity</div>
<div class="t" style="left:903.8px;top:163.05px;font-size:8.8px;line-height:8.8px;font-weight:400;color:#232629;transform:scaleX(1.0656);transform-origin:0 0;">water depth</div>
<div class="t" style="left:903.8px;top:173.05px;font-size:8.8px;line-height:8.8px;font-weight:400;color:#232629;transform:scaleX(1.0523);transform-origin:0 0;">water surface elevation</div>
<div class="t" style="left:888.7px;top:241.05px;font-size:8.8px;line-height:8.8px;font-weight:400;color:#232629;transform:scaleX(1.0415);transform-origin:0 0;">Dataset in selected group(s)</div>
<div style="position:absolute;left:889px;top:256px;width:310px;height:2px;background:#bdbfc0;border-radius:1px"></div>
<div style="position:absolute;left:889px;top:256px;width:112px;height:2.5px;background:#3daee9;border-radius:1px"></div>
<div style="position:absolute;left:998px;top:253.5px;width:7.5px;height:7.5px;background:#fcfcfc;box-sizing:border-box;border:1px solid #b4b6b7;border-radius:2px"></div>
<div style="position:absolute;left:888px;top:270px;width:128px;height:16px;background:#fcfcfc;box-sizing:border-box;border:1px solid #b9bbbc;border-radius:2px"></div>
<div class="t" style="left:890.7px;top:274.05px;font-size:8.8px;line-height:8.8px;font-weight:400;color:#232629;transform:scaleX(1.0568);transform-origin:0 0;">01.01.1990 02:10:02</div>
<div class="t" style="left:902.9px;top:291.54px;font-size:9.4px;line-height:9.4px;font-weight:700;color:#232629;transform:scaleX(1.0408);transform-origin:0 0;">Metadata</div>
<div style="position:absolute;left:889px;top:303px;width:310px;height:1px;background:#c9cbcc"></div>
<div class="t" style="left:896.1px;top:310.54px;font-size:9.4px;line-height:9.4px;font-weight:700;color:#232629;transform:scaleX(1.1857);transform-origin:0 0;">Scalar dataset</div>
<div class="t" style="left:896.9px;top:324.05px;font-size:8.8px;line-height:8.8px;font-weight:400;color:#232629;transform:scaleX(1.0222);transform-origin:0 0;">Is valid</div>
<div class="t" style="left:940.7px;top:324.05px;font-size:8.8px;line-height:8.8px;font-weight:400;color:#232629;transform:scaleX(0.8566);transform-origin:0 0;">Yes</div>
<div class="t" style="left:896.9px;top:336.05px;font-size:8.8px;line-height:8.8px;font-weight:400;color:#232629;transform:scaleX(0.9878);transform-origin:0 0;">Time</div>
<div class="t" style="left:940.7px;top:336.05px;font-size:8.8px;line-height:8.8px;font-weight:400;color:#232629;transform:scaleX(1.0530);transform-origin:0 0;">01.01.1990 00:00:00 (0)</div>
<div class="t" style="left:896.9px;top:348.05px;font-size:8.8px;line-height:8.8px;font-weight:400;color:#232629;transform:scaleX(0.9952);transform-origin:0 0;">Mesh type</div>
<div class="t" style="left:940.7px;top:348.05px;font-size:8.8px;line-height:8.8px;font-weight:400;color:#232629;transform:scaleX(0.9652);transform-origin:0 0;">faces</div>
<div class="t" style="left:896.9px;top:360.05px;font-size:8.8px;line-height:8.8px;font-weight:400;color:#232629;transform:scaleX(1.0569);transform-origin:0 0;">Data type</div>
<div class="t" style="left:940.7px;top:360.05px;font-size:8.8px;line-height:8.8px;font-weight:400;color:#232629;transform:scaleX(1.0227);transform-origin:0 0;">vertices</div>
<div class="t" style="left:896.9px;top:371.05px;font-size:8.8px;line-height:8.8px;font-weight:400;color:#232629;transform:scaleX(1.0226);transform-origin:0 0;">Is vector</div>
<div class="t" style="left:940.7px;top:371.05px;font-size:8.8px;line-height:8.8px;font-weight:400;color:#232629;transform:scaleX(0.9244);transform-origin:0 0;">No</div>
<div class="t" style="left:896.9px;top:383.05px;font-size:8.8px;line-height:8.8px;font-weight:400;color:#232629;transform:scaleX(0.9993);transform-origin:0 0;">name</div>
<div class="t" style="left:940.7px;top:383.05px;font-size:8.8px;line-height:8.8px;font-weight:400;color:#232629;transform:scaleX(1.0185);transform-origin:0 0;">Bed Elevation</div>
<div class="t" style="left:896px;top:402.54px;font-size:9.4px;line-height:9.4px;font-weight:700;color:#232629;transform:scaleX(1.2014);transform-origin:0 0;">Vector dataset</div>
<div class="t" style="left:896.9px;top:416.05px;font-size:8.8px;line-height:8.8px;font-weight:400;color:#232629;transform:scaleX(1.0222);transform-origin:0 0;">Is valid</div>
<div class="t" style="left:940.7px;top:416.05px;font-size:8.8px;line-height:8.8px;font-weight:400;color:#232629;transform:scaleX(0.8566);transform-origin:0 0;">Yes</div>
<div class="t" style="left:896.9px;top:428.05px;font-size:8.8px;line-height:8.8px;font-weight:400;color:#232629;transform:scaleX(0.9878);transform-origin:0 0;">Time</div>
<div class="t" style="left:940.7px;top:428.05px;font-size:8.8px;line-height:8.8px;font-weight:400;color:#232629;transform:scaleX(1.0560);transform-origin:0 0;">01.01.1990 02:10:02 (2.16746)</div>
<div class="t" style="left:896.9px;top:440.05px;font-size:8.8px;line-height:8.8px;font-weight:400;color:#232629;transform:scaleX(0.9952);transform-origin:0 0;">Mesh type</div>
<div class="t" style="left:940.7px;top:440.05px;font-size:8.8px;line-height:8.8px;font-weight:400;color:#232629;transform:scaleX(0.9747);transform-origin:0 0;">faces</div>
<div class="t" style="left:896.9px;top:452.05px;font-size:8.8px;line-height:8.8px;font-weight:400;color:#232629;transform:scaleX(1.0569);transform-origin:0 0;">Data type</div>
<div class="t" style="left:940.7px;top:452.05px;font-size:8.8px;line-height:8.8px;font-weight:400;color:#232629;transform:scaleX(1.0377);transform-origin:0 0;">volumes</div>
<div class="t" style="left:896.9px;top:464.05px;font-size:8.8px;line-height:8.8px;font-weight:400;color:#232629;transform:scaleX(1.0226);transform-origin:0 0;">Is vector</div>
<div class="t" style="left:940.7px;top:464.05px;font-size:8.8px;line-height:8.8px;font-weight:400;color:#232629;transform:scaleX(0.8775);transform-origin:0 0;">Yes</div>
<div class="t" style="left:896.9px;top:476.05px;font-size:8.8px;line-height:8.8px;font-weight:400;color:#232629;transform:scaleX(0.9993);transform-origin:0 0;">name</div>
<div class="t" style="left:940.7px;top:476.05px;font-size:8.8px;line-height:8.8px;font-weight:400;color:#232629;transform:scaleX(1.0564);transform-origin:0 0;">velocity</div>
<div style="position:absolute;left:889px;top:493px;width:310px;height:1px;background:#c9cbcc"></div>
<div class="t" style="left:902.5px;top:497.54px;font-size:9.4px;line-height:9.4px;font-weight:700;color:#232629;transform:scaleX(1.0070);transform-origin:0 0;">Layer Rendering</div>
<div style="position:absolute;left:889px;top:511.5px;width:310px;height:1px;background:#c9cbcc"></div>
<div class="t" style="left:895.8px;top:521.05px;font-size:8.8px;line-height:8.8px;font-weight:400;color:#232629;transform:scaleX(1.0343);transform-origin:0 0;">Blending mode</div>
<div style="position:absolute;left:1046px;top:518px;width:146px;height:15px;background:linear-gradient(#fdfdfd,#f1f2f3);box-sizing:border-box;border:1px solid #d4d6d7;border-left-color:#a9abad;border-right-color:#b9bbbc;border-radius:1px"></div>
<div class="t" style="left:1050px;top:521.05px;font-size:8.8px;line-height:8.8px;font-weight:400;color:#232629;transform:scaleX(1.0579);transform-origin:0 0;">Normal</div>
<div style="position:absolute;left:889px;top:540px;width:310px;height:1px;background:#c9cbcc"></div>
<div style="position:absolute;left:889px;top:591px;width:15px;height:15px;background:linear-gradient(#fcfcfc,#eff0f1);box-sizing:border-box;border:1px solid #b9bbbc;border-radius:2px"></div>
<div style="position:absolute;left:908px;top:591px;width:15px;height:15px;background:linear-gradient(#fcfcfc,#eff0f1);box-sizing:border-box;border:1px solid #b9bbbc;border-radius:2px"></div>
<div class="t" style="left:1093.8px;top:594.05px;font-size:8.8px;line-height:8.8px;font-weight:400;color:#232629;transform:scaleX(1.0396);transform-origin:0 0;">Live update</div>
<div style="position:absolute;left:1149px;top:591px;width:51px;height:14px;background:linear-gradient(#fcfcfc,#eff0f1);box-sizing:border-box;border:1px solid #b9bbbc;border-radius:2px"></div>
<div class="t" style="left:1168.5px;top:594.05px;font-size:8.8px;line-height:8.8px;font-weight:400;color:#232629;transform:scaleX(1.0084);transform-origin:0 0;">Apply</div>
<div style="position:absolute;left:0px;top:608px;width:1200px;height:18px;background:#eff0f1"></div>
<div style="position:absolute;left:0px;top:610px;width:170px;height:15px;background:#fcfcfc;box-sizing:border-box;border:1px solid #c4c6c7;border-radius:2px"></div>
<div class="t" style="left:20.5px;top:613.05px;font-size:8.8px;line-height:8.8px;font-weight:400;color:#7a7e81;transform:scaleX(1.0369);transform-origin:0 0;">Type to locate (Ctrl+K)</div>
<div class="t" style="left:717.5px;top:614.24px;font-size:7.4px;line-height:7.4px;font-weight:400;color:#232629;transform:scaleX(0.9459);transform-origin:0 0;">Coordinate</div>
<div style="position:absolute;left:754px;top:610px;width:45px;height:14px;background:#fcfcfc;box-sizing:border-box;border:1px solid #b9bbbc;border-radius:2px"></div>
<div class="t" style="left:757px;top:613.73px;font-size:8px;line-height:8px;font-weight:400;color:#232629;transform:scaleX(0.9359);transform-origin:0 0;">717.3,113.7</div>
<div class="t" style="left:820.8px;top:614.24px;font-size:7.4px;line-height:7.4px;font-weight:400;color:#232629;transform:scaleX(0.9027);transform-origin:0 0;">Scale</div>
<div style="position:absolute;left:840px;top:610px;width:61px;height:16px;background:#fcfcfc;box-sizing:border-box;border:1px solid #b9bbbc;border-radius:2px"></div>
<div class="t" style="left:842px;top:613.73px;font-size:8px;line-height:8px;font-weight:400;color:#232629;transform:scaleX(0.8991);transform-origin:0 0;">1.52008321</div>
<div class="t" style="left:922.8px;top:614.24px;font-size:7.4px;line-height:7.4px;font-weight:400;color:#232629;transform:scaleX(0.9373);transform-origin:0 0;">Magnifier</div>
<div style="position:absolute;left:954px;top:610px;width:60px;height:14px;background:#fcfcfc;box-sizing:border-box;border:1px solid #b9bbbc;border-radius:2px"></div>
<div class="t" style="left:957px;top:613.73px;font-size:8px;line-height:8px;font-weight:400;color:#232629;transform:scaleX(0.8794);transform-origin:0 0;">100%</div>
<div class="t" style="left:1021.7px;top:614.24px;font-size:7.4px;line-height:7.4px;font-weight:400;color:#232629;transform:scaleX(0.9081);transform-origin:0 0;">Rotation</div>
<div style="position:absolute;left:1053px;top:610px;width:58px;height:14px;background:#fcfcfc;box-sizing:border-box;border:1px solid #b9bbbc;border-radius:2px"></div>
<div class="t" style="left:1056px;top:613.73px;font-size:8px;line-height:8px;font-weight:400;color:#232629;transform:scaleX(1.0274);transform-origin:0 0;">0.0 °</div>
<div class="t" style="left:1127.7px;top:614.24px;font-size:7.4px;line-height:7.4px;font-weight:400;color:#232629;transform:scaleX(0.8701);transform-origin:0 0;">Render</div>
<div style="position:absolute;left:0px;top:625px;width:1200px;height:1px;background:#b3b5b6"></div>
<svg style="position:absolute;left:0;top:0" width="1200" height="626" viewBox="0 0 1200 626"><path d="M1184.6 65.4 v-5.8 h6.2" fill="none" stroke="#3a3c3e" stroke-width="1.2"/><path d="M1184.6 65.4 h1.5" stroke="#3a3c3e" stroke-width="1"/><path d="M1186.5 63.8 l3.5 -2.5 M1188 64.5 h2.5 v-2.5" fill="none" stroke="#3a3c3e" stroke-width="0.9"/><path d="M1193 65.4 v-5.8 h6" fill="none" stroke="#3a3c3e" stroke-width="1.2"/><path d="M1194.5 61.5 l3.5 3.5 M1198 61.5 l-3.5 3.5" stroke="#3a3c3e" stroke-width="1"/><rect x="868" y="74" width="8" height="9" fill="#a6c6e8"/><path d="M870 74 v9 M873 74 v9" stroke="#3a68a0" stroke-width="1"/><path d="M871 80 l4 -5" stroke="#fff" stroke-width="0.8"/><path d="M1189 77 h4.5 l-2.25 2.2z" fill="#6b6e70"/><circle cx="870" cy="101" r="3" fill="#d9534f"/><circle cx="873" cy="99" r="3" fill="#6aa0d8"/><circle cx="874" cy="103" r="2.5" fill="#8fc46a"/><circle cx="871.5" cy="104" r="1.8" fill="#e8c040"/><path d="M874 102 l7 -7" stroke="#a89a40" stroke-width="1.6"/><rect x="869" y="113" width="6.5" height="4.5" fill="#e0403a"/><path d="M872 114 l2 2" stroke="#f8a0a0" stroke-width="0.7"/><path d="M867.5 122 v-4.5 h9 v4.5 M870.5 117.5 v4.5" stroke="#e8a030" stroke-width="1" fill="none"/><rect x="865" y="121" width="6.5" height="6" fill="#f2c530"/><rect x="872.5" y="121" width="6.5" height="6" fill="#6aa0d8"/><path d="M873 126 h5" stroke="#d0e4f8" stroke-width="0.6"/><path d="M867 141 c0 -3 1.5 -4.5 4.5 -4.5" stroke="#6aa86a" stroke-width="1.8" fill="none"/><path d="M871 134 l3 2.5 l-3 2.5z" fill="#6aa86a"/><path d="M877.5 141.5 c0 3 -1.5 4.5 -4.5 4.5" stroke="#e8863a" stroke-width="1.8" fill="none"/><path d="M873.5 143.5 l-3 2.5 l3 2.5z" fill="#e8863a"/><path d="M919.5 110 v-17.5 q0 -1 1 -1 h89.5 q1 0 1 1 v0 M949.5 110 v-18.5 M980.5 110 v-18.5 M1011 110 v-18.5 h29 q1 0 1 1 v17.5" fill="#e9eaeb" stroke="#c3c5c6" stroke-width="0.9"/><rect x="920" y="92" width="121" height="17.5" fill="#e9eaeb"/><path d="M949.5 92 v17.5 M980.5 92 v17.5 M1011 92 v17.5 M920 91.5 h120 M1041 92.5 v17" stroke="#c3c5c6" stroke-width="0.9"/><path d="M888.5 110 v-18.5 q0 -1.5 1.5 -1.5 h27.5 q1.5 0 1.5 1.5 v18.5" fill="#fbfbfb" stroke="#c3c5c6" stroke-width="0.9"/><path d="M896.5 94.5 l4.5 4.5" stroke="#a9abad" stroke-width="1"/><path d="M901.2 99.8 l-3.8 4.4" stroke="#2d6ea8" stroke-width="2.3" stroke-linecap="round"/><path d="M903 95 l2.5 -0.5 l1.8 1.8 l-0.5 2.5 l-1.3 -1.3 l-1.2 0.2 l0.2 -1.2z" fill="#111"/><path d="M904.5 97.5 l-2 2" stroke="#111" stroke-width="1"/><path d="M902.5 100 l4.5 4.3" stroke="#e8472a" stroke-width="2.6" stroke-linecap="round"/><circle cx="902.3" cy="100.2" r="1" fill="#f2c530"/><defs><linearGradient id="rb" x1="0" y1="0" x2="1" y2="1"><stop offset="0" stop-color="#3a7ed0"/><stop offset="0.3" stop-color="#50c8e0"/><stop offset="0.55" stop-color="#8ee07a"/><stop offset="0.8" stop-color="#f0c040"/><stop offset="1" stop-color="#e84a30"/></linearGradient></defs><rect x="926" y="94" width="13" height="12" fill="url(#rb)"/><path d="M959 96 l7 7" stroke="#111" stroke-width="1.1"/><rect x="964.5" y="101.5" width="3.5" height="3.5" fill="#111"/><rect x="990" y="95.5" width="8" height="9" fill="#fff" stroke="#111" stroke-width="1"/><path d="M992.7 95.5 v9 M995.3 95.5 v9 M990 98.5 h8 M990 101.5 h8" stroke="#111" stroke-width="0.9"/><path d="M1020 99 l5 -3 l6 2.5 l-5 3z" fill="#fff" stroke="#555" stroke-width="0.6"/><path d="M1022 100 l4 -4 l2.5 1 l-3 3 l3 1 l-4 4z" fill="#111"/><ellipse cx="1025" cy="104.5" rx="3.5" ry="1.6" fill="#aaa" opacity="0.7"/><defs><linearGradient id="rb2" x1="0" y1="0" x2="1" y2="1"><stop offset="0" stop-color="#4a8ad8"/><stop offset="0.35" stop-color="#70d8d0"/><stop offset="0.6" stop-color="#a8e070"/><stop offset="0.85" stop-color="#f0a040"/><stop offset="1" stop-color="#e85030"/></linearGradient><linearGradient id="gg" x1="0" y1="0" x2="1" y2="0"><stop offset="0" stop-color="#c2c4c5"/><stop offset="1" stop-color="#f4f5f5"/></linearGradient></defs><rect x="1178" y="130" width="10" height="10" fill="url(#rb2)"/><rect x="1178" y="140.5" width="10" height="10" fill="url(#gg)"/><rect x="1178" y="151.5" width="10" height="10" fill="url(#gg)"/><rect x="1178" y="162" width="10" height="20" fill="url(#gg)"/><path d="M1189.5 151.5 l5.5 5" stroke="#222" stroke-width="0.8" stroke-dasharray="1 0.6"/><path d="M1193.5 157.5 l2.5 -2.5 v3.5z" fill="#111"/><path d="M894.2 143.5 l2 2 l-2 2z" fill="#6b6e70"/><path d="M894.2 154 l2 2 l-2 2z" fill="#6b6e70"/><path d="M894.2 164.5 l2 2 l-2 2z" fill="#6b6e70"/><path d="M894.2 175 l2 2 l-2 2z" fill="#6b6e70"/><rect x="892" y="264" width="1" height="1" fill="#8a8c8e"/><rect x="909" y="264" width="1" height="1" fill="#8a8c8e"/><rect x="926" y="264" width="1" height="1" fill="#8a8c8e"/><rect x="934" y="264" width="1" height="1" fill="#8a8c8e"/><rect x="951" y="264" width="1" height="1" fill="#8a8c8e"/><rect x="960" y="264" width="1" height="1" fill="#8a8c8e"/><rect x="968" y="264" width="1" height="1" fill="#8a8c8e"/><rect x="977" y="264" width="1" height="1" fill="#8a8c8e"/><rect x="994" y="264" width="1" height="1" fill="#8a8c8e"/><rect x="1001" y="264" width="1" height="1" fill="#8a8c8e"/><rect x="1018" y="264" width="1" height="1" fill="#8a8c8e"/><rect x="1035" y="264" width="1" height="1" fill="#8a8c8e"/><rect x="1043" y="264" width="1" height="1" fill="#8a8c8e"/><rect x="1060" y="264" width="1" height="1" fill="#8a8c8e"/><rect x="1068" y="264" width="1" height="1" fill="#8a8c8e"/><rect x="1077" y="264" width="1" height="1" fill="#8a8c8e"/><rect x="1085" y="264" width="1" height="1" fill="#8a8c8e"/><rect x="1102" y="264" width="1" height="1" fill="#8a8c8e"/><rect x="1110" y="264" width="1" height="1" fill="#8a8c8e"/><rect x="1119" y="264" width="1" height="1" fill="#8a8c8e"/><rect x="1127" y="264" width="1" height="1" fill="#8a8c8e"/><rect x="1135" y="264" width="1" height="1" fill="#8a8c8e"/><rect x="1144" y="264" width="1" height="1" fill="#8a8c8e"/><rect x="1152" y="264" width="1" height="1" fill="#8a8c8e"/><rect x="1169" y="264" width="1" height="1" fill="#8a8c8e"/><rect x="1177" y="264" width="1" height="1" fill="#8a8c8e"/><rect x="1186" y="264" width="1" height="1" fill="#8a8c8e"/><rect x="1194" y="264" width="1" height="1" fill="#8a8c8e"/><rect x="1003" y="271" width="12" height="14" fill="#eff0f1"/><path d="M1006.5 277.5 h4.5 l-2.25 2.2z" fill="#555"/><path d="M1090 274.5 l2 1 M1089 276 l1 1" stroke="#888" stroke-width="0.6"/><path d="M1091 276 l8 7" stroke="#e0b020" stroke-width="1.8"/><path d="M1092.5 277 l6 5.5" stroke="#7a6a20" stroke-width="0.5"/><path d="M1111 274 l6.5 4 l-6.5 4z" fill="#6b6e70"/><rect x="1128.7" y="274.5" width="1.2" height="7" fill="#6b6e70"/><path d="M1133.5 274.5 v7 l-3.5 -3.5z M1137.3 274.5 v7 l-3.5 -3.5z" fill="#6b6e70"/><rect x="1149.3" y="274.5" width="1.2" height="7" fill="#6b6e70"/><path d="M1156 274.5 v7 l-4.5 -3.5z" fill="#6b6e70"/><rect x="1174.2" y="274.5" width="1.2" height="7" fill="#6b6e70"/><path d="M1168.7 274.5 v7 l4.5 -3.5z" fill="#6b6e70"/><rect x="1195" y="274.5" width="1.2" height="7" fill="#6b6e70"/><path d="M1187 274.5 v7 l3.5 -3.5z M1190.8 274.5 v7 l3.5 -3.5z" fill="#6b6e70"/><path d="M890.5 295.5 h6 l-3 3.7z" fill="#31363b"/><path d="M890.5 502.5 h6 l-3 3.7z" fill="#31363b"/><path d="M1181 524.5 h4.5 l-2.25 2.2z" fill="#6b6e70"/><path d="M899.5 601.5 c2 -1 2 -4.5 -1 -4.5 h-4.5" stroke="#e8863a" stroke-width="1.8" fill="none"/><path d="M895 594.5 l-2.5 2.5 l2.5 2.5z" fill="#e8863a"/><path d="M912 601 c-2 -1 -2 -4.5 1 -4.5 h4" stroke="#5aa05a" stroke-width="1.8" fill="none"/><path d="M916.5 594 l2.5 2.5 l-2.5 2.5z" fill="#5aa05a"/><circle cx="913.5" cy="601" r="1.5" fill="#8ac88a"/><rect x="1082" y="593.5" width="8" height="8" fill="#fcfcfc" stroke="#b9bbbc" stroke-width="0.6"/><path d="M1083.5 597 l1.8 3.3 l3 -6" fill="none" stroke="#111" stroke-width="1.2"/><path d="M1158.5 597.5 l2 2.5 l4.5 -5.5" fill="none" stroke="#31363b" stroke-width="0.9"/><circle cx="8.5" cy="616" r="2.8" fill="none" stroke="#555" stroke-width="1"/><path d="M10.5 618 l2.5 2.5" stroke="#555" stroke-width="1.2"/><circle cx="806" cy="617" r="4" fill="none" stroke="#333" stroke-width="1.3" stroke-dasharray="2 1"/><path d="M802 613 l8 8" stroke="#222" stroke-width="1.2"/><circle cx="807" cy="618" r="1.8" fill="#555"/><rect x="887" y="611" width="13" height="14" fill="#eff0f1"/><path d="M891.5 617 h4.5 l-2.25 2.2z" fill="#6b6e70"/><path d="M910 617 v-2 a2.5 2.5 0 0 1 5 0 v2" fill="none" stroke="#444" stroke-width="1.1"/><rect x="908.5" y="617" width="8" height="6" fill="#5a5a5a"/><path d="M1007.0 616 l2.5 -2.8 l2.5 2.8z M1007.0 619.3 l2.5 2.8 l2.5 -2.8z" fill="#7a7d80"/><rect x="1005.0" y="611" width="0.8" height="13" fill="#d5d7d8"/><path d="M1103.5 616 l2.5 -2.8 l2.5 2.8z M1103.5 619.3 l2.5 2.8 l2.5 -2.8z" fill="#7a7d80"/><rect x="1101.5" y="611" width="0.8" height="13" fill="#d5d7d8"/><rect x="1116" y="612.5" width="7.5" height="8" fill="#fcfcfc" stroke="#b9bbbc" stroke-width="0.6"/><path d="M1117.5 616.3 l1.8 3 l2.8 -5.5" fill="none" stroke="#111" stroke-width="1.1"/><path d="M1161 613 l9.5 9.5 M1170.5 613 l-9.5 9.5" stroke="#4a4c4e" stroke-width="1.4"/><path d="M1165.8 612 v11 M1160 617.7 h11" stroke="#8a8c8e" stroke-width="0.8" stroke-dasharray="1 1"/><path d="M1186 616.5 a5.8 4.8 0 1 1 3 4.2 l-2.5 1.5 l0.5 -2.5 a5 5 0 0 1 -1 -3.2z" fill="#5a5c5e"/><circle cx="1189" cy="616.5" r="0.9" fill="#fff"/><circle cx="1191.8" cy="616.5" r="0.9" fill="#fff"/><circle cx="1194.6" cy="616.5" r="0.9" fill="#fff"/></svg>
</body></html>
